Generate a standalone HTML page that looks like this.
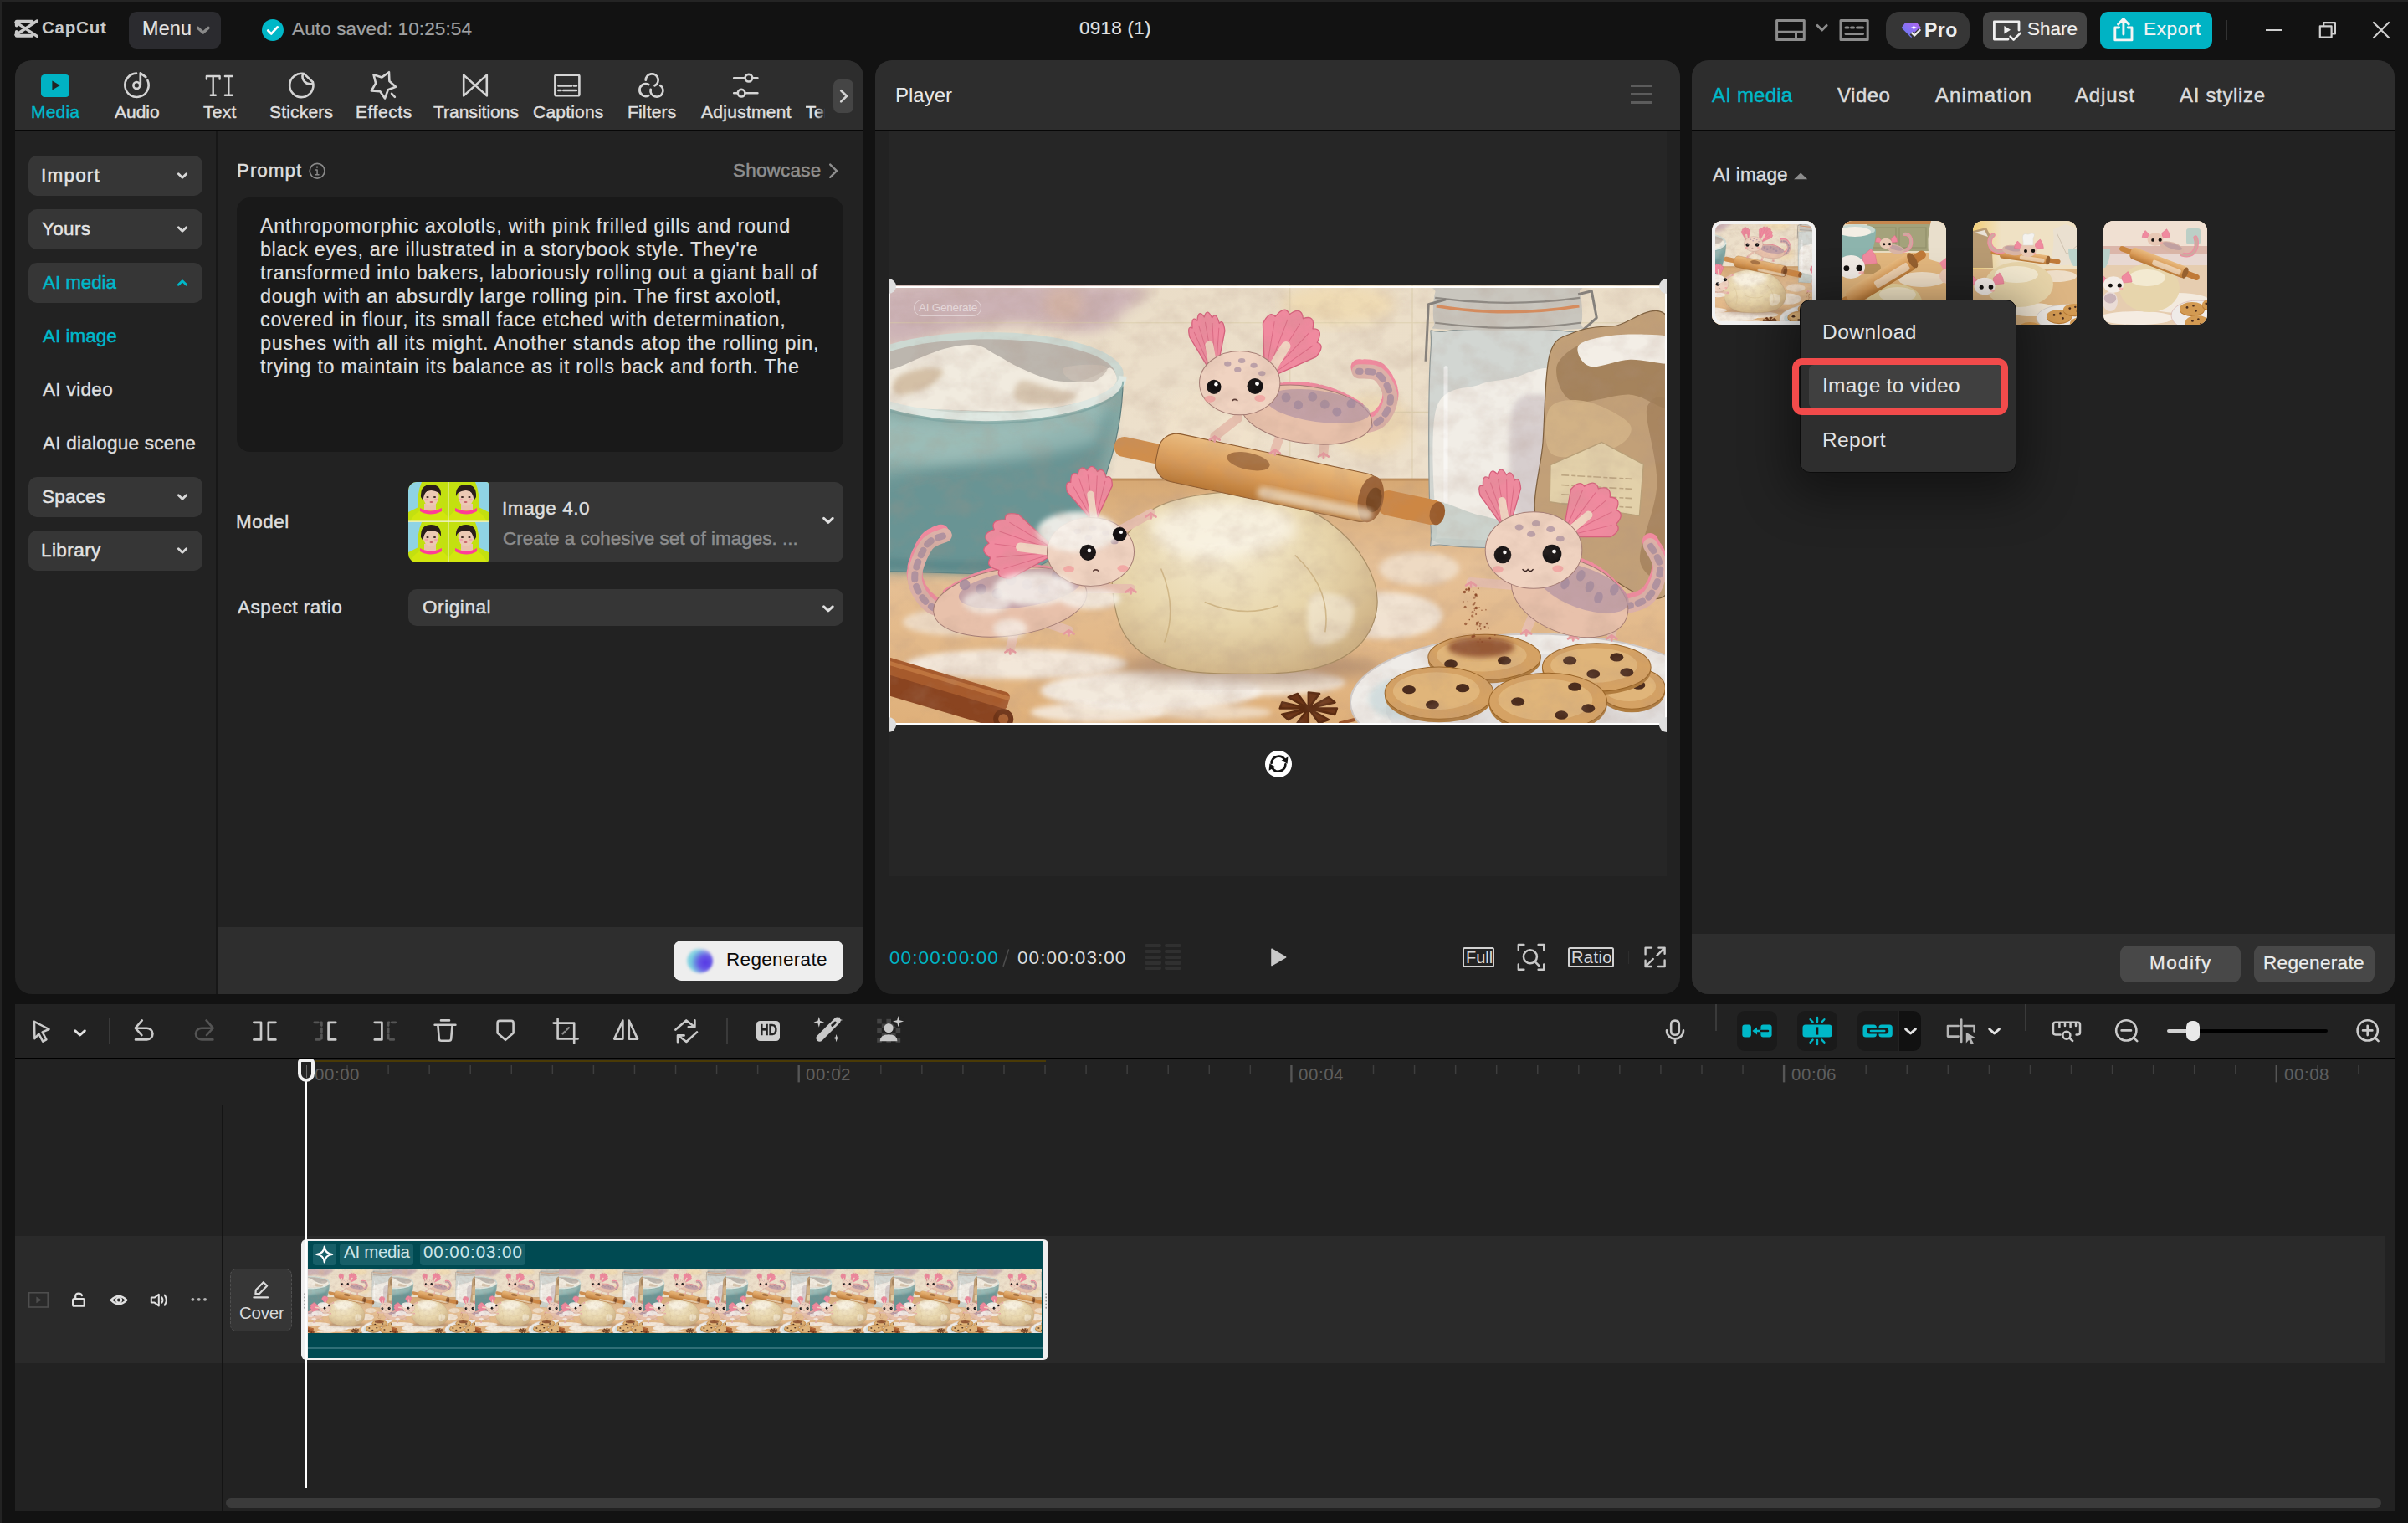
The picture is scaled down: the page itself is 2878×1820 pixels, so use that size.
<!DOCTYPE html>
<html lang="en">
<head>
<meta charset="utf-8">
<title>CapCut - 0918 (1)</title>
<style>
*{box-sizing:border-box;margin:0;padding:0}
html,body{width:2878px;height:1820px;overflow:hidden;background:#121212}
body{font-family:"Liberation Sans",sans-serif;color:#dcdcdc;font-size:22px;position:relative}
.abs{position:absolute}
.t{position:absolute;white-space:nowrap;line-height:1;-webkit-text-stroke:0.45px}
svg{position:absolute;overflow:visible}
</style>
</head>
<body>
<svg width="0" height="0" style="position:absolute"><defs>
<filter id="sc_b3" x="-20%" y="-20%" width="140%" height="140%"><feGaussianBlur stdDeviation="3"/></filter>
<filter id="sc_b6" x="-20%" y="-20%" width="140%" height="140%"><feGaussianBlur stdDeviation="8"/></filter>
<filter id="sc_tex" x="0" y="0" width="100%" height="100%"><feTurbulence type="fractalNoise" baseFrequency="0.03 0.04" numOctaves="4" seed="5" result="n"/><feColorMatrix in="n" type="matrix" values="0 0 0 0 0.42  0 0 0 0 0.28  0 0 0 0 0.22  0 0 0 2.2 -0.9"/></filter>
<linearGradient id="sc_wall" x1="0" y1="0" x2="0" y2="1"><stop offset="0" stop-color="#e9dcc6" stop-opacity=".6"/><stop offset=".5" stop-color="#f0e4d0" stop-opacity=".3"/></linearGradient>
<linearGradient id="sc_table" x1="0" y1="0" x2="0" y2="1"><stop offset="0" stop-color="#d6a873"/><stop offset=".35" stop-color="#e6c197"/><stop offset="1" stop-color="#dfb07a"/></linearGradient>
<radialGradient id="sc_dough" cx=".42" cy=".35" r=".7"><stop offset="0" stop-color="#f3e8cc"/><stop offset=".55" stop-color="#e8d6ac"/><stop offset="1" stop-color="#cdb083"/></radialGradient>
<linearGradient id="sc_pin" x1="0" y1="0" x2="0" y2="1"><stop offset="0" stop-color="#e9bb80"/><stop offset=".55" stop-color="#d99b58"/><stop offset="1" stop-color="#b87836"/></linearGradient>
<symbol id="scene" viewBox="0 0 930 524" preserveAspectRatio="none"><rect width="930" height="524" fill="#ecdfca"/><rect width="930" height="524" fill="url(#sc_wall)"/><path d="M0.0 0.0 C48.4 -11.8 243.4 -5.1 290.5 0.0 C337.6 5.1 290.5 21.6 282.5 30.7 C274.5 39.8 263.9 52.0 242.6 54.7 C221.3 57.4 184.1 46.0 154.8 46.7 C125.5 47.4 92.8 54.7 67.0 58.7 C41.2 62.7 11.2 80.4 0.0 70.6 C-11.2 60.8 -48.4 11.8 0.0 0.0 Z" fill="#c9aeb4" opacity=".9" filter="url(#sc_b6)"/><ellipse cx="210.7" cy="22.7" rx="23.9" ry="21.9" fill="#d8b49a" opacity=".55" filter="url(#sc_b6)"/><ellipse cx="537.9" cy="22.7" rx="67.8" ry="23.9" fill="#f3d9a4" opacity=".55" filter="url(#sc_b6)"/><ellipse cx="577.8" cy="166.4" rx="47.9" ry="35.9" fill="#efd3a0" opacity=".5" filter="url(#sc_b6)"/><ellipse cx="386.3" cy="170.4" rx="59.9" ry="47.9" fill="#f2e3cb" opacity=".6" filter="url(#sc_b6)"/><path d="M480.0 0 V234.2 M625.7 0 V234.2 M0 44.7 H930 M480.0 151.2 H649.6" stroke="#d9caa8" stroke-width="1.2" fill="none" opacity=".7"/><rect x="0" y="231.0" width="930" height="293.0" fill="#e0b583"/><rect x="0" y="231.0" width="930" height="293.0" fill="url(#sc_table)"/><rect x="0" y="230.2" width="930" height="3" fill="#b98a58" opacity=".8"/><path d="M647.6 78.6 C650.6 40.0 638.7 58.7 665.6 54.7 C692.5 50.7 782.4 50.7 809.3 54.7 C836.2 58.7 823.9 40.0 827.2 78.6 C830.5 117.2 831.5 247.5 829.2 286.1 C826.9 324.7 840.5 306.1 813.2 310.1 C785.9 314.1 693.2 314.1 665.6 310.1 C638.0 306.1 650.6 324.7 647.6 286.1 C644.6 247.5 644.6 117.2 647.6 78.6 Z" fill="#d2d6d2" stroke="#8d9898" stroke-width="1.2"/><path d="M654.4 146.4 C662.9 118.5 690.3 124.5 705.5 118.5 C720.7 112.5 732.1 113.8 745.4 110.5 C758.7 107.2 772.5 98.6 785.3 98.6 C798.1 98.6 815.7 79.2 822.0 110.5 C828.3 141.8 825.3 254.2 823.2 286.1 C821.1 318.0 834.9 299.4 809.3 302.1 C783.7 304.8 695.4 304.8 669.6 302.1 C643.8 299.4 656.9 312.1 654.4 286.1 C651.9 260.2 645.9 174.3 654.4 146.4 Z" fill="#f1ede6" /><path d="M745.4 146.4 C752.0 125.1 772.7 131.8 785.3 130.5 C797.9 129.2 815.1 113.2 821.2 138.5 C827.3 163.8 829.3 255.5 822.0 282.1 C814.7 308.7 790.1 302.1 777.3 298.1 C764.5 294.1 750.7 283.5 745.4 258.2 C740.1 232.9 738.8 167.7 745.4 146.4 Z" fill="#cdc2c4" opacity=".7" filter="url(#sc_b3)"/><path d="M654.4 258.2 C663.7 256.2 683.7 268.8 705.5 274.1 C727.3 279.4 765.7 288.1 785.3 290.1 C804.9 292.1 818.6 283.1 823.2 286.1 C827.9 289.1 839.5 304.2 813.2 308.1 C786.9 312.0 692.9 313.0 665.6 309.3 C638.3 305.6 651.5 294.6 649.6 286.1 C647.7 277.6 645.1 260.2 654.4 258.2 Z" fill="#bfc9c4" opacity=".75"/><path d="M665.6 98.6 L665.6 258.2" stroke="#ffffff" stroke-width="5" opacity=".55" stroke-linecap="round"/><path d="M652.8 8.8 C655.1 1.8 638.9 3.8 665.6 2.8 C692.3 1.8 786.6 1.8 813.2 2.8 C839.8 3.8 822.9 1.8 825.2 8.8 C827.5 15.8 829.2 37.4 827.2 44.7 C825.2 52.0 840.1 51.4 813.2 52.7 C786.3 54.0 692.5 54.0 665.6 52.7 C638.7 51.4 653.7 52.0 651.6 44.7 C649.5 37.4 650.5 15.8 652.8 8.8 Z" fill="#c9c6be" /><path d="M654.4 24.7 Q739.4 38.7 824.4 24.7" stroke="#d88c5c" stroke-width="3.5" fill="none"/><path d="M652.8 14.8 Q739.4 26.7 825.2 14.8" stroke="#8e8a84" stroke-width="2.2" fill="none"/><path d="M652.8 44.7 Q739.4 56.7 826.0 44.7" stroke="#8e8a84" stroke-width="2.2" fill="none"/><path d="M665.6 16.8 L644.9 22.7 L641.7 90.6 M823.2 10.8 L839.2 6.8 L845.2 38.7 L827.2 54.7" stroke="#85817c" stroke-width="3" fill="none" stroke-linejoin="round"/><path d="M789.3 82.6 C795.3 61.0 804.6 62.4 817.2 56.7 C829.8 51.1 845.1 49.0 865.1 48.7 C885.1 48.4 925.0 3.8 937.0 54.7 C949.0 105.6 952.3 306.4 937.0 354.0 C921.7 401.6 872.2 351.3 845.2 340.0 C818.2 328.7 785.9 311.7 775.3 286.1 C764.6 260.5 779.0 220.3 781.3 186.4 C783.6 152.5 783.3 104.2 789.3 82.6 Z" fill="#c2a078" stroke="#7c5e3c" stroke-width="1.2"/><path d="M797.3 98.6 C798.6 87.3 813.9 76.3 825.2 70.6 C836.5 64.9 846.5 62.6 865.1 64.6 C883.7 66.6 925.0 69.0 937.0 82.6 C949.0 96.2 945.6 138.4 937.0 146.4 C928.4 154.4 905.1 131.8 885.1 130.5 C865.1 129.2 831.8 143.8 817.2 138.5 C802.6 133.2 796.0 109.9 797.3 98.6 Z" fill="#9d7c55" opacity=".8"/><path d="M905.0 146.4 C908.3 132.4 931.7 122.5 937.0 154.4 C942.3 186.3 943.7 308.7 937.0 338.0 C930.3 367.3 900.3 346.6 897.0 330.0 C893.7 313.4 915.7 268.8 917.0 238.2 C918.3 207.6 901.7 160.4 905.0 146.4 Z" fill="#a07e58" opacity=".75"/><path d="M789.3 146.4 C795.9 135.8 817.2 135.2 833.2 138.5 C849.2 141.8 879.8 157.1 885.1 166.4 C890.4 175.7 880.4 188.3 865.1 194.3 C849.8 200.3 805.9 210.3 793.3 202.3 C780.7 194.3 782.6 157.0 789.3 146.4 Z" fill="#d6b68a" opacity=".8"/><path d="M823.2 72.6 C826.5 66.6 843.5 63.0 857.1 60.7 C870.7 58.4 891.7 58.1 905.0 58.7 C918.3 59.4 931.7 58.9 937.0 64.6 C942.3 70.2 945.6 88.6 937.0 92.6 C928.4 96.6 901.7 87.9 885.1 88.6 C868.5 89.3 847.5 99.3 837.2 96.6 C826.9 93.9 819.9 78.6 823.2 72.6 Z" fill="#f3eee6" /><path d="M790.1 214.3 L851.2 187.2 L901.0 213.5 L896.2 274.9 L789.3 258.2 Z" fill="#e3d1aa" stroke="#b9a078" stroke-width="1.4"/><path d="M803.3 226.3 L887.1 231.0" stroke="#b49c78" stroke-width="1.6" opacity=".8" stroke-dasharray="9 3 5 2"/><path d="M803.3 238.2 L887.1 243.0" stroke="#b49c78" stroke-width="1.6" opacity=".8" stroke-dasharray="9 3 5 2"/><path d="M803.3 249.4 L887.1 254.2" stroke="#b49c78" stroke-width="1.6" opacity=".8" stroke-dasharray="9 3 5 2"/><path d="M803.3 260.2 L887.1 265.0" stroke="#b49c78" stroke-width="1.6" opacity=".8" stroke-dasharray="9 3 5 2"/><path d="M-36.7 110.5 L281.3 110.5 C280.5 170.4 264.6 234.2 230.6 290.1 C212.7 318.0 182.8 342.8 140.9 345.2 L-36.7 340.0 Z" fill="#86aaa6" stroke="#5b7d7e" stroke-width="1.2"/><path d="M-36.7 234.2 C67.0 218.3 166.8 194.3 266.6 146.4 C262.6 218.3 234.6 290.1 210.7 318.0 C186.8 342.0 154.8 345.2 140.9 345.2 L-36.7 340.0 Z" fill="#648f90" opacity=".8" filter="url(#sc_b6)"/><path d="M-36.7 150.4 C67.0 170.4 186.8 166.4 266.6 130.5 L250.6 186.4 C146.8 218.3 47.1 218.3 -36.7 202.3 Z" fill="#a9c8c2" opacity=".6" filter="url(#sc_b6)"/><path d="M-36.7 322.0 C47.1 330.0 118.9 332.0 174.8 322.0 L154.8 344.0 L-36.7 340.0 Z" fill="#4f7f82" opacity=".55" filter="url(#sc_b3)"/><ellipse cx="118.9" cy="105.7" rx="162.8" ry="49.9" fill="#cdd9d2" /><ellipse cx="118.9" cy="107.3" rx="153.6" ry="43.1" fill="#bcb6ae" /><path d="M-28.7 110.5 C-22.1 103.8 -0.1 102.6 11.2 98.6 C22.5 94.6 28.8 90.6 39.1 86.6 C49.4 82.6 61.7 77.1 73.0 74.6 C84.3 72.1 97.2 69.9 106.9 71.4 C116.6 72.9 122.2 78.9 130.9 83.4 C139.6 87.9 148.2 93.8 158.8 98.6 C169.4 103.4 183.4 109.8 194.7 112.5 C206.0 115.2 217.4 115.5 226.7 114.5 C236.0 113.5 243.9 109.2 250.6 106.5 C257.2 103.8 263.0 96.9 266.6 98.6 C270.2 100.3 276.5 110.2 272.5 116.5 C268.5 122.8 262.2 131.0 242.6 136.5 C223.0 142.0 190.7 147.9 154.8 149.6 C118.9 151.2 57.7 148.2 27.1 146.4 C-3.5 144.6 -19.4 144.5 -28.7 138.5 C-38.0 132.5 -35.4 117.2 -28.7 110.5 Z" fill="#f1ebdf" /><path d="M11.2 110.5 C16.5 105.2 33.8 99.9 43.1 98.6 C52.4 97.3 66.3 98.6 67.0 102.6 C67.7 106.6 56.4 117.8 47.1 122.5 C37.8 127.2 17.2 132.5 11.2 130.5 C5.2 128.5 5.9 115.8 11.2 110.5 Z" fill="#cdb699" opacity=".8" filter="url(#sc_b3)"/><path d="M158.8 114.5 C165.5 111.8 183.4 119.8 194.7 122.5 C206.0 125.2 225.4 127.2 226.7 130.5 C228.0 133.8 214.7 141.2 202.7 142.5 C190.7 143.8 162.1 143.2 154.8 138.5 C147.5 133.8 152.2 117.2 158.8 114.5 Z" fill="#cdb89e" opacity=".7" filter="url(#sc_b3)"/><path d="M210.7 98.6 C214.7 95.6 233.9 94.6 242.6 94.6 C251.2 94.6 261.9 95.3 262.6 98.6 C263.3 101.9 253.9 112.2 246.6 114.5 C239.3 116.8 224.7 115.2 218.7 112.5 C212.7 109.8 206.7 101.6 210.7 98.6 Z" fill="#c9bfb4" opacity=".8"/><path d="M-36.7 122.5 A162.8 49.9 0 0 0 281.3 108.5" stroke="#dfe8e2" stroke-width="9" fill="none"/><path d="M-36.7 129.7 A162.8 49.9 0 0 0 281.3 114.5" stroke="#7da5a2" stroke-width="2" fill="none" opacity=".8"/><ellipse cx="154.8" cy="451.7" rx="131.7" ry="18.0" fill="#f6f0e8" opacity="0.85" filter="url(#sc_b3)"/><ellipse cx="314.4" cy="483.6" rx="131.7" ry="23.9" fill="#f6f0e8" opacity="0.9" filter="url(#sc_b3)"/><ellipse cx="446.1" cy="473.7" rx="99.8" ry="16.0" fill="#f6f0e8" opacity="0.8" filter="url(#sc_b3)"/><ellipse cx="593.8" cy="393.9" rx="67.8" ry="27.9" fill="#f6f0e8" opacity="0.75" filter="url(#sc_b3)"/><ellipse cx="633.7" cy="338.0" rx="47.9" ry="20.0" fill="#f6f0e8" opacity="0.55" filter="url(#sc_b3)"/><ellipse cx="79.0" cy="401.8" rx="59.9" ry="16.0" fill="#f6f0e8" opacity="0.6" filter="url(#sc_b3)"/><ellipse cx="250.6" cy="509.6" rx="79.8" ry="12.0" fill="#f6f0e8" opacity="0.8" filter="url(#sc_b3)"/><ellipse cx="386.3" cy="509.6" rx="71.8" ry="8.8" fill="#f6f0e8" opacity="0.6" filter="url(#sc_b3)"/><ellipse cx="430.2" cy="455.7" rx="159.6" ry="19.2" fill="#9c7c66" opacity=".55" filter="url(#sc_b6)"/><path d="M268.6 361.9 C267.3 343.3 270.2 326.1 278.5 310.1 C286.8 294.2 300.4 276.5 318.4 266.2 C336.4 255.9 363.0 250.9 386.3 248.2 C409.6 245.5 434.8 244.5 458.1 250.2 C481.4 255.8 507.3 268.8 525.9 282.1 C544.5 295.4 560.1 313.4 569.8 330.0 C579.4 346.6 585.1 365.3 583.8 381.9 C582.5 398.5 574.9 417.2 561.9 429.8 C548.9 442.4 530.0 452.1 506.0 457.7 C482.1 463.3 446.1 464.0 418.2 463.7 C390.3 463.4 360.3 462.7 338.4 455.7 C316.4 448.7 298.1 437.4 286.5 421.8 C274.9 406.2 269.9 380.5 268.6 361.9 Z" fill="url(#sc_dough)" stroke="#a88d63" stroke-width="1.2"/><path d="M314.4 282.1 C321.0 271.5 361.0 260.9 386.3 258.2 C411.6 255.5 449.5 259.5 466.1 266.2 C482.7 272.9 492.6 288.8 486.0 298.1 C479.4 307.4 449.5 318.0 426.2 322.0 C402.9 326.0 365.0 328.6 346.4 322.0 C327.8 315.4 307.8 292.7 314.4 282.1 Z" fill="#fbf6ea" opacity=".75" filter="url(#sc_b6)"/><path d="M506.0 369.9 C514.0 361.9 547.2 369.9 553.9 377.9 C560.5 385.9 553.9 409.8 545.9 417.8 C537.9 425.8 512.6 433.8 506.0 425.8 C499.4 417.8 498.0 377.9 506.0 369.9 Z" fill="#fbf6ea" opacity=".5" filter="url(#sc_b3)"/><path d="M326.4 338.0 Q346.4 385.9 330.4 425.8 M486.0 322.0 Q529.9 361.9 521.9 413.8 M378.3 377.9 Q426.2 397.8 466.1 381.9" stroke="#c9ae7c" stroke-width="1.6" fill="none" opacity=".8"/><g transform="rotate(12 454.9 229.4)"><rect x="266.9" y="217.4" width="62" height="24" rx="12" fill="#d08e4c"/><rect x="586.9" y="214.4" width="80" height="30" rx="14" fill="#cd8744"/><ellipse cx="659.9" cy="229.4" rx="9" ry="14" fill="#9a5c2c"/><rect x="318.9" y="200.4" width="272" height="58" rx="22" fill="url(#sc_pin)" stroke="#8e5c30" stroke-width="1.1"/><ellipse cx="578.9" cy="229.4" rx="15" ry="28.0" fill="#9b6236"/><ellipse cx="582.9" cy="229.4" rx="9" ry="15" fill="#6f421f" opacity=".8"/><rect x="444.9" y="241.4" width="140" height="14" rx="7" fill="#f3e6d0" opacity=".7" filter="url(#sc_b3)"/><ellipse cx="426.9" cy="215.4" rx="26" ry="10" fill="#8f5a30" opacity=".7"/></g><ellipse cx="769.4" cy="497.6" rx="217.5" ry="81.8" fill="#efece8" /><ellipse cx="769.4" cy="497.6" rx="217.5" ry="81.8" fill="none" stroke="#cfcac8" stroke-width="2"/><ellipse cx="769.4" cy="503.6" rx="175.6" ry="63.8" fill="#dcd8d8" opacity=".7"/><ellipse cx="609.7" cy="493.6" rx="35.9" ry="23.9" fill="#bfd3d6" opacity=".6" filter="url(#sc_b3)"/><ellipse cx="887.1" cy="484.8" rx="39.9" ry="24.7" fill="#b07c3e" /><ellipse cx="887.1" cy="480.8" rx="39.9" ry="24.7" fill="#d5a264" stroke="#9a6528" stroke-width="1"/><ellipse cx="883.9" cy="478.5" rx="31.9" ry="17.8" fill="#e2ba80" opacity=".8"/><ellipse cx="895.1" cy="476.9" rx="8.0" ry="5.2" fill="#4b2c1d" /><ellipse cx="845.2" cy="459.7" rx="64.6" ry="28.7" fill="#b07c3e" /><ellipse cx="845.2" cy="455.7" rx="64.6" ry="28.7" fill="#d5a264" stroke="#9a6528" stroke-width="1"/><ellipse cx="842.0" cy="453.3" rx="51.7" ry="20.7" fill="#e2ba80" opacity=".8"/><ellipse cx="813.2" cy="447.7" rx="8.0" ry="5.2" fill="#4b2c1d" /><ellipse cx="869.1" cy="443.7" rx="8.0" ry="5.2" fill="#4b2c1d" /><ellipse cx="881.1" cy="461.7" rx="8.0" ry="5.2" fill="#4b2c1d" /><ellipse cx="841.2" cy="463.7" rx="8.0" ry="5.2" fill="#4b2c1d" /><ellipse cx="711.5" cy="447.7" rx="67.0" ry="27.1" fill="#b07c3e" /><ellipse cx="711.5" cy="443.7" rx="67.0" ry="27.1" fill="#d5a264" stroke="#9a6528" stroke-width="1"/><ellipse cx="708.3" cy="441.3" rx="53.6" ry="19.5" fill="#e2ba80" opacity=".8"/><ellipse cx="735.4" cy="447.7" rx="8.0" ry="5.2" fill="#4b2c1d" /><ellipse cx="671.6" cy="451.7" rx="8.0" ry="5.2" fill="#4b2c1d" /><ellipse cx="707.5" cy="431.8" rx="39.9" ry="12.0" fill="#8a4a2a" opacity=".85" filter="url(#sc_b3)"/><ellipse cx="657.6" cy="490.4" rx="64.6" ry="31.1" fill="#b07c3e" /><ellipse cx="657.6" cy="486.4" rx="64.6" ry="31.1" fill="#d5a264" stroke="#9a6528" stroke-width="1"/><ellipse cx="654.4" cy="484.0" rx="51.7" ry="22.4" fill="#e2ba80" opacity=".8"/><ellipse cx="621.7" cy="482.4" rx="8.0" ry="5.2" fill="#4b2c1d" /><ellipse cx="685.6" cy="480.4" rx="8.0" ry="5.2" fill="#4b2c1d" /><ellipse cx="649.6" cy="500.4" rx="8.0" ry="5.2" fill="#4b2c1d" /><ellipse cx="787.3" cy="500.8" rx="70.2" ry="34.3" fill="#b07c3e" /><ellipse cx="787.3" cy="496.8" rx="70.2" ry="34.3" fill="#d5a264" stroke="#9a6528" stroke-width="1"/><ellipse cx="784.1" cy="494.4" rx="56.2" ry="24.7" fill="#e2ba80" opacity=".8"/><ellipse cx="819.2" cy="478.9" rx="8.0" ry="5.2" fill="#4b2c1d" /><ellipse cx="751.4" cy="496.8" rx="8.0" ry="5.2" fill="#4b2c1d" /><ellipse cx="803.3" cy="512.8" rx="8.0" ry="5.2" fill="#4b2c1d" /><ellipse cx="835.2" cy="504.8" rx="8.0" ry="5.2" fill="#4b2c1d" /><circle cx="705.5" cy="384.5" r="0.8" fill="#8a4626" opacity="0.74"/><circle cx="708.4" cy="387.7" r="0.8" fill="#8a4626" opacity="0.73"/><circle cx="693.5" cy="362.8" r="0.8" fill="#8a4626" opacity="0.69"/><circle cx="706.5" cy="422.6" r="0.8" fill="#8a4626" opacity="0.60"/><circle cx="712.0" cy="407.5" r="1.1" fill="#8a4626" opacity="0.94"/><circle cx="693.0" cy="363.5" r="1.6" fill="#8a4626" opacity="0.63"/><circle cx="701.8" cy="370.9" r="1.6" fill="#8a4626" opacity="0.58"/><circle cx="706.7" cy="404.0" r="1.4" fill="#8a4626" opacity="0.67"/><circle cx="704.4" cy="401.5" r="0.9" fill="#8a4626" opacity="0.81"/><circle cx="701.6" cy="392.4" r="1.0" fill="#8a4626" opacity="0.76"/><circle cx="697.0" cy="394.3" r="1.5" fill="#8a4626" opacity="0.61"/><circle cx="714.6" cy="403.5" r="1.3" fill="#8a4626" opacity="0.89"/><circle cx="699.5" cy="415.2" r="0.8" fill="#8a4626" opacity="0.69"/><circle cx="724.1" cy="417.3" r="0.9" fill="#8a4626" opacity="0.72"/><circle cx="690.0" cy="362.9" r="1.3" fill="#8a4626" opacity="0.89"/><circle cx="688.6" cy="383.7" r="1.5" fill="#8a4626" opacity="0.77"/><circle cx="689.2" cy="403.9" r="1.7" fill="#8a4626" opacity="0.71"/><circle cx="707.2" cy="410.3" r="0.8" fill="#8a4626" opacity="0.82"/><circle cx="716.6" cy="409.0" r="1.0" fill="#8a4626" opacity="0.67"/><circle cx="703.0" cy="410.6" r="0.7" fill="#8a4626" opacity="0.71"/><circle cx="699.4" cy="372.7" r="1.5" fill="#8a4626" opacity="0.56"/><circle cx="700.2" cy="378.7" r="1.1" fill="#8a4626" opacity="0.89"/><circle cx="687.9" cy="366.0" r="1.7" fill="#8a4626" opacity="0.87"/><circle cx="708.7" cy="425.4" r="1.0" fill="#8a4626" opacity="0.69"/><circle cx="713.3" cy="387.1" r="0.9" fill="#8a4626" opacity="0.58"/><circle cx="686.3" cy="377.5" r="1.0" fill="#8a4626" opacity="0.72"/><circle cx="702.5" cy="404.6" r="1.2" fill="#8a4626" opacity="0.67"/><circle cx="703.0" cy="402.9" r="1.7" fill="#8a4626" opacity="0.81"/><circle cx="693.7" cy="399.0" r="0.8" fill="#8a4626" opacity="0.90"/><circle cx="697.6" cy="419.1" r="1.7" fill="#8a4626" opacity="0.86"/><circle cx="697.5" cy="389.7" r="1.4" fill="#8a4626" opacity="0.53"/><circle cx="698.3" cy="365.0" r="0.9" fill="#8a4626" opacity="0.57"/><circle cx="699.7" cy="385.7" r="0.9" fill="#8a4626" opacity="0.55"/><circle cx="699.9" cy="387.5" r="0.7" fill="#8a4626" opacity="0.89"/><circle cx="706.1" cy="406.5" r="1.1" fill="#8a4626" opacity="0.66"/><circle cx="701.4" cy="369.2" r="1.6" fill="#8a4626" opacity="0.95"/><circle cx="698.1" cy="395.3" r="0.8" fill="#8a4626" opacity="0.65"/><circle cx="699.0" cy="380.0" r="1.6" fill="#8a4626" opacity="0.57"/><circle cx="704.2" cy="361.7" r="0.9" fill="#8a4626" opacity="0.74"/><circle cx="693.2" cy="362.0" r="1.3" fill="#8a4626" opacity="0.94"/><circle cx="704.0" cy="425.4" r="1.1" fill="#8a4626" opacity="0.58"/><circle cx="699.5" cy="418.5" r="1.3" fill="#8a4626" opacity="0.85"/><circle cx="701.7" cy="384.9" r="1.8" fill="#8a4626" opacity="0.88"/><circle cx="718.1" cy="421.1" r="1.6" fill="#8a4626" opacity="0.83"/><circle cx="691.6" cy="377.1" r="0.7" fill="#8a4626" opacity="0.51"/><circle cx="698.1" cy="381.1" r="1.0" fill="#8a4626" opacity="0.81"/><g transform="rotate(16.5 0.0 457.7)"><rect x="-10" y="443.7" width="160" height="22" rx="6" fill="#a65a2c"/><rect x="-10" y="463.7" width="168" height="24" rx="8" fill="#8a4420"/><rect x="-10" y="447.7" width="160" height="5" fill="#c47a44" opacity=".8"/><circle cx="150" cy="475.7" r="12" fill="#6e3316"/><circle cx="150" cy="475.7" r="6" fill="#a86032"/></g><path d="M502.0 504.8 L536.0 504.8 L533.3 512.2 Z M502.0 504.8 L526.0 518.2 L514.8 522.4 Z M502.0 504.8 L502.0 523.8 L488.8 522.3 Z M502.0 504.8 L478.0 518.2 L470.5 511.9 Z M502.0 504.8 L468.0 504.8 L470.7 497.4 Z M502.0 504.8 L478.0 491.4 L489.2 487.2 Z M502.0 504.8 L502.0 485.8 L515.2 487.3 Z M502.0 504.8 L526.0 491.4 L533.5 497.7 Z " fill="#6b3416" stroke="#5a2a10" stroke-width="2.5" stroke-linejoin="round"/><path d="M539.9 522.3 L555.9 518.4" stroke="#9a5228" stroke-width="4" stroke-linecap="round"/><path d="M553.9 170.4 C559.2 169.1 578.1 168.4 585.8 162.4 C593.4 156.4 599.8 143.8 599.8 134.5 C599.8 125.2 592.1 111.8 585.8 106.5 C579.5 101.2 565.9 103.2 561.9 102.6" stroke="#f08a9f" stroke-width="19" fill="none" stroke-linecap="round" stroke-dasharray="7 5" transform="translate(0 -5)"/><path d="M553.9 170.4 C559.2 169.1 578.1 168.4 585.8 162.4 C593.4 156.4 599.8 143.8 599.8 134.5 C599.8 125.2 592.1 111.8 585.8 106.5 C579.5 101.2 565.9 103.2 561.9 102.6" stroke="#dcb1a8" stroke-width="17" fill="none" stroke-linecap="round"/><path d="M553.9 170.4 C559.2 169.1 578.1 168.4 585.8 162.4 C593.4 156.4 599.8 143.8 599.8 134.5 C599.8 125.2 592.1 111.8 585.8 106.5 C579.5 101.2 565.9 103.2 561.9 102.6" stroke="#a58b9e" stroke-width="8" fill="none" stroke-linecap="round" stroke-dasharray="6 9" opacity=".8"/><path d="M418.2 158.4 L390.3 180.4" stroke="#e6bfae" stroke-width="11" stroke-linecap="round"/><path d="M390.3 180.4 l-6 4 M390.3 180.4 l0 6 M390.3 180.4 l6 4" stroke="#e79aa0" stroke-width="2.6" stroke-linecap="round"/><path d="M470.1 174.4 L462.1 196.3" stroke="#e6bfae" stroke-width="11" stroke-linecap="round"/><path d="M462.1 196.3 l-6 4 M462.1 196.3 l0 6 M462.1 196.3 l6 4" stroke="#e79aa0" stroke-width="2.6" stroke-linecap="round"/><path d="M521.9 178.4 L520.0 200.3" stroke="#e6bfae" stroke-width="11" stroke-linecap="round"/><path d="M520.0 200.3 l-6 4 M520.0 200.3 l0 6 M520.0 200.3 l6 4" stroke="#e79aa0" stroke-width="2.6" stroke-linecap="round"/><g transform="rotate(8 500.0 154.4)"><ellipse cx="500.0" cy="128.9" rx="70.2" ry="8" fill="#f08a9f" opacity=".0"/><path d="M437.6 135.7 q62.400000000000006 -30.6 124.80000000000001 0" stroke="#f08a9f" stroke-width="9" fill="none" stroke-dasharray="7 4" stroke-linecap="round"/><ellipse cx="500.0" cy="154.4" rx="78" ry="34" fill="#e8c1ab" stroke="#a47c74" stroke-width="1"/><ellipse cx="511.7" cy="142.5" rx="62.400000000000006" ry="18.700000000000003" fill="#b393a4" opacity=".7"/><ellipse cx="457.1" cy="130.6" rx="5.5" ry="5.4" fill="#a58b9e" opacity=".85"/><ellipse cx="472.7" cy="137.4" rx="5.5" ry="5.4" fill="#a58b9e" opacity=".85"/><ellipse cx="488.3" cy="144.2" rx="5.5" ry="5.4" fill="#a58b9e" opacity=".85"/><ellipse cx="503.9" cy="132.3" rx="5.5" ry="5.4" fill="#a58b9e" opacity=".85"/><ellipse cx="519.5" cy="139.1" rx="5.5" ry="5.4" fill="#a58b9e" opacity=".85"/><ellipse cx="535.1" cy="145.9" rx="5.5" ry="5.4" fill="#a58b9e" opacity=".85"/><ellipse cx="550.7" cy="134.0" rx="5.5" ry="5.4" fill="#a58b9e" opacity=".85"/></g><path d="M391.1 112.5 L360.6 61.8 Q357.1 47.2 363.7 50.9 Q362.3 35.4 369.6 42.1 Q370.7 27.6 377.9 37.8 Q381.2 25.8 387.2 39.0 Q391.8 30.2 395.8 45.2 Q400.7 39.5 402.4 54.4 Z" fill="#f08a9f" stroke="#d6607c" stroke-width="1.3" stroke-linejoin="round"/><path d="M391.1 112.5 L365.8 55.8 M391.1 112.5 L371.3 47.8 M391.1 112.5 L379.0 43.8 M391.1 112.5 L387.6 44.9 M391.1 112.5 L395.4 50.6 " stroke="#d6607c" stroke-width="1" fill="none" opacity=".75"/><path d="M391.1 112.5 L383.9 71.4" stroke="#f0d3c1" stroke-width="9.9" stroke-linecap="round"/><path d="M450.1 112.5 L447.8 45.6 Q455.4 29.4 462.5 37.2 Q474.2 22.6 479.5 34.6 Q493.9 24.0 495.6 39.7 Q510.5 34.3 507.2 51.9 Q520.4 51.4 512.4 68.3 Q522.5 71.3 511.2 85.3 Z" fill="#f08a9f" stroke="#d6607c" stroke-width="1.3" stroke-linejoin="round"/><path d="M450.1 112.5 L461.5 43.2 M450.1 112.5 L477.1 40.8 M450.1 112.5 L491.9 45.6 M450.1 112.5 L502.7 56.8 M450.1 112.5 L507.4 71.9 " stroke="#d6607c" stroke-width="1" fill="none" opacity=".75"/><path d="M450.1 112.5 L475.1 72.5" stroke="#f0d3c1" stroke-width="11.2" stroke-linecap="round"/><ellipse cx="420.2" cy="116.5" rx="48.0" ry="38.0" fill="#f0d3c1" stroke="#a47c74" stroke-width="1"/><ellipse cx="405.8" cy="93.7" rx="4.2" ry="3.0" fill="#a58b9e" opacity=".7"/><ellipse cx="422.6" cy="89.9" rx="4.2" ry="3.0" fill="#a58b9e" opacity=".7"/><ellipse cx="437.0" cy="95.6" rx="4.2" ry="3.0" fill="#a58b9e" opacity=".7"/><ellipse cx="417.8" cy="100.5" rx="4.2" ry="3.0" fill="#a58b9e" opacity=".7"/><ellipse cx="446.6" cy="105.1" rx="4.2" ry="3.0" fill="#a58b9e" opacity=".7"/><circle cx="389.5" cy="121.1" r="8.6" fill="#141112"/><circle cx="438.4" cy="120.3" r="9.4" fill="#141112"/><circle cx="392.0" cy="118.1" r="2.2" fill="#fff"/><circle cx="440.9" cy="117.3" r="2.4" fill="#fff"/><ellipse cx="384.7" cy="135.5" rx="6.5" ry="4" fill="#f39c9c" opacity=".75"/><ellipse cx="444.2" cy="134.7" rx="6.5" ry="4" fill="#f39c9c" opacity=".75"/><path d="M411.4 137.4 q3 -2.500 6 0" stroke="#5a3a34" stroke-width="1.5" fill="none" stroke-linecap="round"/><path d="M865.1 385.9 C871.8 383.9 895.7 381.9 905.0 373.9 C914.3 365.9 920.3 348.6 921.0 338.0 C921.7 327.4 911.0 314.8 909.0 310.1" stroke="#f08a9f" stroke-width="19" fill="none" stroke-linecap="round" stroke-dasharray="7 5" transform="translate(0 -5)"/><path d="M865.1 385.9 C871.8 383.9 895.7 381.9 905.0 373.9 C914.3 365.9 920.3 348.6 921.0 338.0 C921.7 327.4 911.0 314.8 909.0 310.1" stroke="#dcb1a8" stroke-width="17" fill="none" stroke-linecap="round"/><path d="M865.1 385.9 C871.8 383.9 895.7 381.9 905.0 373.9 C914.3 365.9 920.3 348.6 921.0 338.0 C921.7 327.4 911.0 314.8 909.0 310.1" stroke="#a58b9e" stroke-width="8" fill="none" stroke-linecap="round" stroke-dasharray="6 9" opacity=".8"/><path d="M745.4 357.9 L695.5 354.0" stroke="#e6bfae" stroke-width="11" stroke-linecap="round"/><path d="M695.5 354.0 l-6 4 M695.5 354.0 l0 6 M695.5 354.0 l6 4" stroke="#e79aa0" stroke-width="2.6" stroke-linecap="round"/><path d="M769.4 393.9 L761.4 411.8" stroke="#e6bfae" stroke-width="11" stroke-linecap="round"/><path d="M761.4 411.8 l-6 4 M761.4 411.8 l0 6 M761.4 411.8 l6 4" stroke="#e79aa0" stroke-width="2.6" stroke-linecap="round"/><path d="M829.2 401.8 L817.2 417.8" stroke="#e6bfae" stroke-width="11" stroke-linecap="round"/><path d="M817.2 417.8 l-6 4 M817.2 417.8 l0 6 M817.2 417.8 l6 4" stroke="#e79aa0" stroke-width="2.6" stroke-linecap="round"/><path d="M865.1 401.8 L863.1 417.8" stroke="#e6bfae" stroke-width="11" stroke-linecap="round"/><path d="M863.1 417.8 l-6 4 M863.1 417.8 l0 6 M863.1 417.8 l6 4" stroke="#e79aa0" stroke-width="2.6" stroke-linecap="round"/><g transform="rotate(20 813.2 371.9)"><ellipse cx="813.2" cy="338.9" rx="64.8" ry="8" fill="#f08a9f" opacity=".0"/><path d="M755.6 347.7 q57.6 -39.6 115.2 0" stroke="#f08a9f" stroke-width="9" fill="none" stroke-dasharray="7 4" stroke-linecap="round"/><ellipse cx="813.2" cy="371.9" rx="72" ry="44" fill="#e8c1ab" stroke="#a47c74" stroke-width="1"/><ellipse cx="824.0" cy="356.5" rx="57.6" ry="24.200000000000003" fill="#b393a4" opacity=".7"/><ellipse cx="773.6" cy="341.1" rx="5.0" ry="7.0" fill="#a58b9e" opacity=".85"/><ellipse cx="788.0" cy="349.9" rx="5.0" ry="7.0" fill="#a58b9e" opacity=".85"/><ellipse cx="802.4" cy="358.7" rx="5.0" ry="7.0" fill="#a58b9e" opacity=".85"/><ellipse cx="816.8" cy="343.3" rx="5.0" ry="7.0" fill="#a58b9e" opacity=".85"/><ellipse cx="831.2" cy="352.1" rx="5.0" ry="7.0" fill="#a58b9e" opacity=".85"/><ellipse cx="845.6" cy="360.9" rx="5.0" ry="7.0" fill="#a58b9e" opacity=".85"/><ellipse cx="860.0" cy="345.5" rx="5.0" ry="7.0" fill="#a58b9e" opacity=".85"/></g><path d="M739.4 296.1 L706.5 250.8 Q702.8 236.7 710.0 239.3 Q708.9 224.3 717.1 230.1 Q718.9 216.0 726.9 225.4 Q731.2 213.8 737.8 226.4 Q743.5 218.3 747.6 232.7 Q753.5 227.8 754.8 242.2 Z" fill="#f08a9f" stroke="#d6607c" stroke-width="1.3" stroke-linejoin="round"/><path d="M739.4 296.1 L712.4 243.9 M739.4 296.1 L718.9 235.3 M739.4 296.1 L727.9 231.0 M739.4 296.1 L737.9 232.0 M739.4 296.1 L746.9 237.8 " stroke="#d6607c" stroke-width="1" fill="none" opacity=".75"/><path d="M739.4 296.1 L732.5 257.2" stroke="#f0d3c1" stroke-width="9.3" stroke-linecap="round"/><path d="M804.5 300.1 L814.5 243.4 Q825.1 231.4 830.5 239.8 Q844.6 230.7 847.3 242.6 Q862.8 238.3 861.1 252.6 Q875.5 253.4 868.5 267.9 Q879.8 272.7 868.4 284.9 Q875.7 291.8 862.1 300.1 Z" fill="#f08a9f" stroke="#d6607c" stroke-width="1.3" stroke-linejoin="round"/><path d="M804.5 300.1 L828.4 244.6 M804.5 300.1 L843.9 247.2 M804.5 300.1 L856.5 256.4 M804.5 300.1 L863.4 270.5 M804.5 300.1 L863.3 286.2 " stroke="#d6607c" stroke-width="1" fill="none" opacity=".75"/><path d="M804.5 300.1 L835.6 274.0" stroke="#f0d3c1" stroke-width="9.6" stroke-linecap="round"/><ellipse cx="770.2" cy="316.0" rx="57.599999999999994" ry="45.6" fill="#f0d3c1" stroke="#a47c74" stroke-width="1"/><ellipse cx="752.9" cy="288.6" rx="5.0" ry="3.6" fill="#a58b9e" opacity=".7"/><ellipse cx="773.1" cy="284.1" rx="5.0" ry="3.6" fill="#a58b9e" opacity=".7"/><ellipse cx="790.4" cy="290.9" rx="5.0" ry="3.6" fill="#a58b9e" opacity=".7"/><ellipse cx="767.3" cy="296.8" rx="5.0" ry="3.6" fill="#a58b9e" opacity=".7"/><ellipse cx="801.9" cy="302.3" rx="5.0" ry="3.6" fill="#a58b9e" opacity=".7"/><circle cx="733.3" cy="321.5" r="10.3" fill="#141112"/><circle cx="792.1" cy="320.6" r="11.3" fill="#141112"/><circle cx="735.8" cy="318.5" r="2.2" fill="#fff"/><circle cx="794.6" cy="317.6" r="2.4" fill="#fff"/><ellipse cx="727.6" cy="338.8" rx="6.5" ry="4" fill="#f39c9c" opacity=".75"/><ellipse cx="799.0" cy="337.9" rx="6.5" ry="4" fill="#f39c9c" opacity=".75"/><path d="M757.3 339.1 q3 4 6 0 q3 4 6 0" stroke="#3a2420" stroke-width="1.6" fill="none" stroke-linecap="round"/><path d="M87.0 393.9 C81.0 391.9 60.1 389.2 51.1 381.9 C42.1 374.6 33.8 362.0 33.1 350.0 C32.4 338.0 41.1 318.8 47.1 310.1 C53.1 301.5 65.3 300.1 69.0 298.1" stroke="#f08a9f" stroke-width="19" fill="none" stroke-linecap="round" stroke-dasharray="7 5" transform="translate(0 -5)"/><path d="M87.0 393.9 C81.0 391.9 60.1 389.2 51.1 381.9 C42.1 374.6 33.8 362.0 33.1 350.0 C32.4 338.0 41.1 318.8 47.1 310.1 C53.1 301.5 65.3 300.1 69.0 298.1" stroke="#dcb1a8" stroke-width="17" fill="none" stroke-linecap="round"/><path d="M87.0 393.9 C81.0 391.9 60.1 389.2 51.1 381.9 C42.1 374.6 33.8 362.0 33.1 350.0 C32.4 338.0 41.1 318.8 47.1 310.1 C53.1 301.5 65.3 300.1 69.0 298.1" stroke="#a58b9e" stroke-width="8" fill="none" stroke-linecap="round" stroke-dasharray="6 9" opacity=".8"/><path d="M226.7 361.9 L290.5 361.9" stroke="#e6bfae" stroke-width="11" stroke-linecap="round"/><path d="M290.5 361.9 l-6 4 M290.5 361.9 l0 6 M290.5 361.9 l6 4" stroke="#e79aa0" stroke-width="2.6" stroke-linecap="round"/><path d="M266.6 298.1 L314.4 272.1" stroke="#e6bfae" stroke-width="11" stroke-linecap="round"/><path d="M314.4 272.1 l-6 4 M314.4 272.1 l0 6 M314.4 272.1 l6 4" stroke="#e79aa0" stroke-width="2.6" stroke-linecap="round"/><path d="M154.8 401.8 L146.8 433.8" stroke="#e6bfae" stroke-width="11" stroke-linecap="round"/><path d="M146.8 433.8 l-6 4 M146.8 433.8 l0 6 M146.8 433.8 l6 4" stroke="#e79aa0" stroke-width="2.6" stroke-linecap="round"/><path d="M186.8 401.8 L216.7 411.8" stroke="#e6bfae" stroke-width="11" stroke-linecap="round"/><path d="M216.7 411.8 l-6 4 M216.7 411.8 l0 6 M216.7 411.8 l6 4" stroke="#e79aa0" stroke-width="2.6" stroke-linecap="round"/><g transform="rotate(-8 146.8 377.9)"><ellipse cx="146.8" cy="347.9" rx="82.8" ry="8" fill="#f08a9f" opacity=".0"/><path d="M73.2 355.9 q73.60000000000001 -36.0 147.20000000000002 0" stroke="#f08a9f" stroke-width="9" fill="none" stroke-dasharray="7 4" stroke-linecap="round"/><ellipse cx="146.8" cy="377.9" rx="92" ry="40" fill="#e8c1ab" stroke="#a47c74" stroke-width="1"/><ellipse cx="160.60000000000002" cy="363.9" rx="73.60000000000001" ry="22.0" fill="#b393a4" opacity=".7"/><ellipse cx="96.2" cy="349.9" rx="6.4" ry="6.4" fill="#a58b9e" opacity=".85"/><ellipse cx="114.6" cy="357.9" rx="6.4" ry="6.4" fill="#a58b9e" opacity=".85"/><ellipse cx="133.0" cy="365.9" rx="6.4" ry="6.4" fill="#a58b9e" opacity=".85"/><ellipse cx="151.4" cy="351.9" rx="6.4" ry="6.4" fill="#a58b9e" opacity=".85"/><ellipse cx="169.8" cy="359.9" rx="6.4" ry="6.4" fill="#a58b9e" opacity=".85"/><ellipse cx="188.2" cy="367.9" rx="6.4" ry="6.4" fill="#a58b9e" opacity=".85"/><ellipse cx="206.6" cy="353.9" rx="6.4" ry="6.4" fill="#a58b9e" opacity=".85"/></g><path d="M204.7 318.0 L147.5 349.7 Q129.8 349.8 133.4 339.8 Q115.4 335.4 123.7 325.1 Q108.2 316.3 121.5 307.8 Q110.7 296.3 127.8 291.5 Q122.3 279.6 140.8 279.6 Q139.7 269.0 156.9 273.4 Z" fill="#f08a9f" stroke="#d6607c" stroke-width="1.3" stroke-linejoin="round"/><path d="M204.7 318.0 L139.1 338.1 M204.7 318.0 L130.2 324.5 M204.7 318.0 L128.2 308.6 M204.7 318.0 L134.0 293.6 M204.7 318.0 L145.9 282.7 " stroke="#d6607c" stroke-width="1" fill="none" opacity=".75"/><path d="M204.7 318.0 L159.0 312.4" stroke="#f0d3c1" stroke-width="10.9" stroke-linecap="round"/><path d="M247.4 284.1 L214.7 246.5 Q211.4 233.6 219.0 234.9 Q218.7 221.0 227.2 225.5 Q230.2 212.6 238.5 220.9 Q244.2 210.7 250.6 222.2 Q257.6 215.6 261.1 229.0 Q268.1 225.7 268.4 239.0 Z" fill="#f08a9f" stroke="#d6607c" stroke-width="1.3" stroke-linejoin="round"/><path d="M247.4 284.1 L221.3 238.8 M247.4 284.1 L228.8 230.2 M247.4 284.1 L239.2 225.9 M247.4 284.1 L250.4 227.2 M247.4 284.1 L260.0 233.4 " stroke="#d6607c" stroke-width="1" fill="none" opacity=".75"/><path d="M247.4 284.1 L242.5 249.3" stroke="#f0d3c1" stroke-width="8.3" stroke-linecap="round"/><ellipse cx="242.6" cy="318.0" rx="51.84" ry="41.040000000000006" fill="#f0d3c1" stroke="#a47c74" stroke-width="1"/><ellipse cx="227.0" cy="293.4" rx="4.5" ry="3.2" fill="#a58b9e" opacity=".7"/><ellipse cx="245.2" cy="289.3" rx="4.5" ry="3.2" fill="#a58b9e" opacity=".7"/><ellipse cx="260.7" cy="295.4" rx="4.5" ry="3.2" fill="#a58b9e" opacity=".7"/><ellipse cx="240.0" cy="300.8" rx="4.5" ry="3.2" fill="#a58b9e" opacity=".7"/><ellipse cx="271.1" cy="305.7" rx="4.5" ry="3.2" fill="#a58b9e" opacity=".7"/><ellipse cx="216.7" cy="338.5" rx="6.5" ry="4" fill="#f39c9c" opacity=".75"/><ellipse cx="281.0" cy="337.7" rx="6.5" ry="4" fill="#f39c9c" opacity=".75"/><path d="M245.8 340.6 q3 -2.500 6 0" stroke="#5a3a34" stroke-width="1.5" fill="none" stroke-linecap="round"/><ellipse cx="226.7" cy="294.1" rx="47.9" ry="23.9" fill="#f8f4ee" opacity="0.9" filter="url(#sc_b3)"/><ellipse cx="174.8" cy="361.9" rx="47.9" ry="20.0" fill="#f8f4ee" opacity="0.85" filter="url(#sc_b3)"/><ellipse cx="118.9" cy="377.9" rx="27.9" ry="14.0" fill="#f8f4ee" opacity="0.7" filter="url(#sc_b3)"/><ellipse cx="242.6" cy="373.9" rx="35.9" ry="12.0" fill="#f8f4ee" opacity="0.8" filter="url(#sc_b3)"/><ellipse cx="146.8" cy="409.8" rx="20.0" ry="12.0" fill="#f8f4ee" opacity="0.7" filter="url(#sc_b3)"/><circle cx="239.4" cy="318.8" r="9.6" fill="#141112"/><circle cx="277.3" cy="296.9" r="8.4" fill="#141112"/><circle cx="241.0" cy="316.4" r="2.3" fill="#fff"/><circle cx="278.9" cy="294.5" r="2.1" fill="#fff"/><rect width="930" height="524" filter="url(#sc_tex)" opacity=".2"/></symbol>
<symbol id="scene2" viewBox="0 0 124 124"><rect width="124" height="124" fill="#e3b77e"/><rect width="124" height="38" fill="#e9dcc0"/><rect x="30" y="3" width="76" height="33" fill="#a4a27b"/><rect x="34" y="8" width="30" height="24" fill="none" stroke="#8f8d68" stroke-width="1"/><rect x="68" y="8" width="32" height="24" fill="none" stroke="#8f8d68" stroke-width="1"/><rect width="124" height="4" fill="#c6874e"/><path d="M106 0 H124 V52 L104 46 Q100 20 106 0 Z" fill="#e9dfcc"/><path d="M-4 10 H40 Q40 40 20 56 H-4 Z" fill="#8db4ad"/><ellipse cx="17" cy="11" rx="22" ry="7" fill="#c8d8d0"/><ellipse cx="15" cy="13" rx="19" ry="6" fill="#f3eee4"/><ellipse cx="30" cy="56" rx="16" ry="8" fill="#8a6a38" opacity=".45"/><ellipse cx="95" cy="70" rx="28" ry="9" fill="#f3e9da" opacity=".8"/><ellipse cx="62" cy="97" rx="33" ry="22" fill="#e9d49e"/><ellipse cx="66" cy="88" rx="22" ry="9" fill="#f6eed8" opacity=".7"/><g transform="rotate(-31 46 70)"><rect x="-14.0" y="65.38" width="17" height="9.24" rx="4.62" fill="#c9853f"/><rect x="89.0" y="64.75" width="19" height="10.5" rx="5.25" fill="#c07a38"/><rect x="0.0" y="59.5" width="92" height="21" rx="7.35" fill="url(#sc_pin)"/><ellipse cx="90.0" cy="70" rx="4.62" ry="10.08" fill="#96602f"/><rect x="36.8" y="67.9" width="46.0" height="9.450000000000001" rx="2" fill="#f6efe2" opacity=".6"/></g><path d="M72 36 Q84 34 82 22 Q80 15 74 16" stroke="#ee8ea2" stroke-width="4.125" fill="none" stroke-linecap="round"/><path d="M72 36 Q84 34 82 22 Q80 15 74 16" stroke="#cfa9a0" stroke-width="2.4" fill="none" stroke-linecap="round"/><ellipse cx="64" cy="34" rx="10" ry="5.5" fill="#d9b5a6" transform="rotate(15 64 34)"/><ellipse cx="64" cy="32.35" rx="8.0" ry="2.75" fill="#a88c9c" opacity=".5" transform="rotate(15 64 34)"/><path d="M45.6 25.9 l-6.1 -0.8 l0.8 -3.4 l2.2 -3.0 l3.7 3.8 Z" fill="#f08a9f" stroke="#dd6f88" stroke-width=".5"/><path d="M58.4 25.9 l7.4 -0.8 l-0.8 -4.1 l-2.2 -3.7 l-4.5 3.8 Z" fill="#f08a9f" stroke="#dd6f88" stroke-width=".5"/><ellipse cx="52" cy="27" rx="7.5" ry="6.1499999999999995" fill="#e8c8b4"/><circle cx="49.8" cy="27.8" r="1.5" fill="#15110f"/><circle cx="56.5" cy="27.6" r="1.6" fill="#15110f"/><ellipse cx="57.6" cy="30.1" rx="1.5" ry="0.9" fill="#f39c9c" opacity=".7"/><path d="M-4.4 52.5 l-13.8 -1.7 l1.7 -7.7 l5.1 -6.9 l8.4 8.5 Z" fill="#f08a9f" stroke="#dd6f88" stroke-width=".5"/><path d="M24.4 52.5 l16.8 -1.7 l-1.7 -9.4 l-5.1 -8.4 l-10.3 8.5 Z" fill="#f08a9f" stroke="#dd6f88" stroke-width=".5"/><ellipse cx="10" cy="55" rx="17" ry="13.94" fill="#f3ece6"/><circle cx="4.9" cy="56.7" r="3.4" fill="#15110f"/><circle cx="20.2" cy="56.4" r="3.7" fill="#15110f"/><ellipse cx="22.8" cy="62.1" rx="3.4" ry="2.0" fill="#f39c9c" opacity=".7"/><path d="M116 50 l8 -6 v20 Z" fill="#f08a9f"/><ellipse cx="126" cy="66" rx="10" ry="9" fill="#ecc9b4"/></symbol>
<symbol id="scene3" viewBox="0 0 124 124"><rect width="124" height="124" fill="#ddb684"/><rect width="124" height="58" fill="#efe1c4"/><rect width="34" height="58" fill="url(#t3glow)"/><path d="M0 12 L16 8 L22 20 L24 56 H0 Z" fill="#b89b73"/><path d="M2 14 l12 -3 l4 8 Z" fill="#e9e2d6"/><path d="M96 10 L110 4 L124 8 V52 L92 54 Q98 30 96 10 Z" fill="#eae0d0"/><path d="M100 14 L112 40 L124 30" stroke="#cfc3b0" stroke-width="1" fill="none"/><path d="M114 34 H128 V54 H120 Q114 46 114 34 Z" fill="#bcd3cb"/><ellipse cx="100" cy="66" rx="24" ry="7" fill="#f3e9da" opacity=".8"/><ellipse cx="70" cy="106" rx="30" ry="8" fill="#f5eee2" opacity=".85"/><ellipse cx="55" cy="76" rx="41" ry="27" fill="#e7d4a9"/><ellipse cx="52" cy="64" rx="26" ry="10" fill="#f6efdc" opacity=".75"/><g transform="rotate(8 62 43)"><rect x="21.0" y="40.58" width="14" height="4.84" rx="2.42" fill="#c9853f"/><rect x="89.0" y="40.25" width="16" height="5.5" rx="2.75" fill="#c07a38"/><rect x="32.0" y="37.5" width="60" height="11" rx="3.8499999999999996" fill="url(#sc_pin)"/><ellipse cx="90.0" cy="43" rx="2.42" ry="5.279999999999999" fill="#96602f"/><rect x="56.0" y="41.9" width="30.0" height="4.95" rx="2" fill="#f6efe2" opacity=".6"/></g><path d="M36 36 Q22 38 20 26 Q20 20 24 17" stroke="#ee8ea2" stroke-width="5.5" fill="none" stroke-linecap="round"/><path d="M36 36 Q22 38 20 26 Q20 20 24 17" stroke="#cfa9a0" stroke-width="3.2" fill="none" stroke-linecap="round"/><ellipse cx="48" cy="35" rx="13" ry="6" fill="#d9b5a6" transform="rotate(8 48 35)"/><ellipse cx="48" cy="33.2" rx="10.4" ry="3.0" fill="#a88c9c" opacity=".5" transform="rotate(8 48 35)"/><path d="M57.5 33.5 l-8.1 -1.0 l1.0 -4.5 l3.0 -4.0 l5.0 5.0 Z" fill="#f08a9f" stroke="#dd6f88" stroke-width=".5"/><path d="M74.5 33.5 l9.9 -1.0 l-1.0 -5.5 l-3.0 -5.0 l-6.1 5.0 Z" fill="#f08a9f" stroke="#dd6f88" stroke-width=".5"/><ellipse cx="66" cy="35" rx="10" ry="8.2" fill="#e8c8b4"/><path d="M60.0 29.0 h12.0 v-8.0 q5.0 -9.0 -6.0 -5.0 q-9.0 -3.0 -6.0 9.0 Z" fill="#f4f2ee" stroke="#d8d4cc" stroke-width=".5"/><circle cx="63.0" cy="36.0" r="2.0" fill="#15110f"/><circle cx="72.0" cy="35.8" r="2.2" fill="#15110f"/><ellipse cx="73.5" cy="39.2" rx="2.0" ry="1.2" fill="#f39c9c" opacity=".7"/><path d="M3.4 76.1 l-10.1 -1.2 l1.2 -5.6 l3.8 -5.1 l6.2 6.2 Z" fill="#f08a9f" stroke="#dd6f88" stroke-width=".5"/><path d="M24.6 76.1 l12.4 -1.2 l-1.2 -6.9 l-3.8 -6.2 l-7.6 6.2 Z" fill="#f08a9f" stroke="#dd6f88" stroke-width=".5"/><ellipse cx="14" cy="78" rx="12.5" ry="10.25" fill="#f3ece6"/><circle cx="10.2" cy="79.2" r="2.5" fill="#15110f"/><circle cx="21.5" cy="79.0" r="2.8" fill="#15110f"/><ellipse cx="23.4" cy="83.2" rx="2.5" ry="1.5" fill="#f39c9c" opacity=".7"/><ellipse cx="113" cy="116" rx="37" ry="16" fill="#ece8e4"/><ellipse cx="113" cy="116" rx="37" ry="16" fill="none" stroke="#d3cdc9" stroke-width=".8"/><ellipse cx="103" cy="115.2" rx="15" ry="8" fill="#b87a34"/><ellipse cx="103" cy="114" rx="15" ry="8" fill="#d39a52"/><circle cx="97.0" cy="112.4" r="1.4" fill="#4b2c1d"/><circle cx="107.5" cy="116.4" r="1.3" fill="#4b2c1d"/><circle cx="104.5" cy="110.4" r="1.2" fill="#4b2c1d"/><ellipse cx="121" cy="107.2" rx="13" ry="7" fill="#b87a34"/><ellipse cx="121" cy="106" rx="13" ry="7" fill="#d39a52"/><circle cx="115.8" cy="104.6" r="1.4" fill="#4b2c1d"/><circle cx="124.9" cy="108.1" r="1.3" fill="#4b2c1d"/><circle cx="122.3" cy="102.85" r="1.2" fill="#4b2c1d"/><ellipse cx="126" cy="123.2" rx="10" ry="6" fill="#b87a34"/><ellipse cx="126" cy="122" rx="10" ry="6" fill="#d39a52"/><circle cx="122.0" cy="120.8" r="1.4" fill="#4b2c1d"/><circle cx="129.0" cy="123.8" r="1.3" fill="#4b2c1d"/><circle cx="127.0" cy="119.3" r="1.2" fill="#4b2c1d"/><ellipse cx="68" cy="130.2" rx="14" ry="8" fill="#b87a34"/><ellipse cx="68" cy="129" rx="14" ry="8" fill="#d39a52"/><circle cx="62.4" cy="127.4" r="1.4" fill="#4b2c1d"/><circle cx="72.2" cy="131.4" r="1.3" fill="#4b2c1d"/><circle cx="69.4" cy="125.4" r="1.2" fill="#4b2c1d"/></symbol>
<symbol id="scene4" viewBox="0 0 124 124"><rect width="124" height="124" fill="#e6cdb0"/><rect width="124" height="52" fill="#f0e0d2"/><rect y="30" width="124" height="9" fill="#dbb6aa"/><rect y="39" width="124" height="14" fill="#e8d8d2"/><rect x="99" y="9" width="17" height="19" rx="3" fill="#bccfc6"/><path d="M-4 34 H8 Q8 48 2 56 H-4 Z" fill="#b9d0c9"/><ellipse cx="90" cy="98" rx="40" ry="12" fill="#f5efe6" opacity=".85"/><ellipse cx="40" cy="116" rx="44" ry="8" fill="#f6f0e8" opacity=".9"/><ellipse cx="55" cy="80" rx="36" ry="29" fill="#e7d5ac"/><ellipse cx="52" cy="68" rx="22" ry="10" fill="#f7f0de" opacity=".75"/><g transform="rotate(21 66 50)"><rect x="16.0" y="46.81" width="17" height="6.38" rx="3.19" fill="#c9853f"/><rect x="99.0" y="46.375" width="19" height="7.25" rx="3.625" fill="#c07a38"/><rect x="30.0" y="42.75" width="72" height="14.5" rx="5.074999999999999" fill="url(#sc_pin)"/><ellipse cx="100.0" cy="50" rx="3.19" ry="6.96" fill="#96602f"/><rect x="58.8" y="48.55" width="36.0" height="6.525" rx="2" fill="#f6efe2" opacity=".6"/></g><path d="M94 40 Q108 44 111 30 Q112 24 110 20" stroke="#ee8ea2" stroke-width="5.2250000000000005" fill="none" stroke-linecap="round"/><path d="M94 40 Q108 44 111 30 Q112 24 110 20" stroke="#cfa9a0" stroke-width="3.04" fill="none" stroke-linecap="round"/><ellipse cx="82" cy="32" rx="15" ry="6.5" fill="#d9b5a6" transform="rotate(18 82 32)"/><ellipse cx="82" cy="30.05" rx="12.0" ry="3.25" fill="#a88c9c" opacity=".5" transform="rotate(18 82 32)"/><path d="M53.9 20.6 l-7.7 -1.0 l1.0 -4.3 l2.9 -3.8 l4.7 4.8 Z" fill="#f08a9f" stroke="#dd6f88" stroke-width=".5"/><path d="M70.1 20.6 l9.4 -1.0 l-1.0 -5.2 l-2.9 -4.7 l-5.7 4.8 Z" fill="#f08a9f" stroke="#dd6f88" stroke-width=".5"/><ellipse cx="62" cy="22" rx="9.5" ry="7.789999999999999" fill="#e8c8b4"/><circle cx="59.1" cy="22.9" r="1.9" fill="#15110f"/><circle cx="67.7" cy="22.8" r="2.1" fill="#15110f"/><ellipse cx="69.1" cy="26.0" rx="1.9" ry="1.1" fill="#f39c9c" opacity=".7"/><ellipse cx="8" cy="96" rx="9" ry="12" fill="#eadcd6" transform="rotate(0 8 96)"/><ellipse cx="8" cy="92.4" rx="7.2" ry="6.0" fill="#a88c9c" opacity=".5" transform="rotate(0 8 96)"/><path d="M1.8 74.2 l-9.7 -1.2 l1.2 -5.4 l3.6 -4.9 l5.9 6.0 Z" fill="#f08a9f" stroke="#dd6f88" stroke-width=".5"/><path d="M22.2 74.2 l11.9 -1.2 l-1.2 -6.6 l-3.6 -5.9 l-7.3 6.0 Z" fill="#f08a9f" stroke="#dd6f88" stroke-width=".5"/><ellipse cx="12" cy="76" rx="12" ry="9.84" fill="#f3ece6"/><circle cx="8.4" cy="77.2" r="2.4" fill="#15110f"/><circle cx="19.2" cy="77.0" r="2.6" fill="#15110f"/><ellipse cx="21.0" cy="81.0" rx="2.4" ry="1.4" fill="#f39c9c" opacity=".7"/><ellipse cx="113" cy="113" rx="32" ry="18" fill="#efebe8"/><ellipse cx="113" cy="113" rx="32" ry="18" fill="none" stroke="#d9b9b4" stroke-width=".8"/><ellipse cx="106" cy="106.2" rx="15" ry="8" fill="#b87a34"/><ellipse cx="106" cy="105" rx="15" ry="8" fill="#d39a52"/><circle cx="100.0" cy="103.4" r="1.4" fill="#4b2c1d"/><circle cx="110.5" cy="107.4" r="1.3" fill="#4b2c1d"/><circle cx="107.5" cy="101.4" r="1.2" fill="#4b2c1d"/><ellipse cx="112" cy="122.2" rx="14" ry="8" fill="#b87a34"/><ellipse cx="112" cy="121" rx="14" ry="8" fill="#d39a52"/><circle cx="106.4" cy="119.4" r="1.4" fill="#4b2c1d"/><circle cx="116.2" cy="123.4" r="1.3" fill="#4b2c1d"/><circle cx="113.4" cy="117.4" r="1.2" fill="#4b2c1d"/><ellipse cx="126" cy="101.2" rx="8" ry="6" fill="#b87a34"/><ellipse cx="126" cy="100" rx="8" ry="6" fill="#d39a52"/><circle cx="122.8" cy="98.8" r="1.4" fill="#4b2c1d"/><circle cx="128.4" cy="101.8" r="1.3" fill="#4b2c1d"/><circle cx="126.8" cy="97.3" r="1.2" fill="#4b2c1d"/></symbol>
<linearGradient id="t3glow" x1="0" y1="0" x2="1" y2="0"><stop offset="0" stop-color="#f2cc6e" stop-opacity=".9"/><stop offset="1" stop-color="#f2cc6e" stop-opacity="0"/></linearGradient>
</defs></svg>
<!-- window frame -->
<div class="abs" style="left:0px;top:0px;width:2878px;height:2px;background:#242424;"></div>
<div class="abs" style="left:0px;top:0px;width:2px;height:1820px;background:#232323;"></div>
<!-- ===== top bar ===== -->
<svg style="left:0;top:0" width="1" height="1"><path d="M19.8 30.6 V25.7 H38.4 M19.8 38 V42.7 H38.4" fill="none" stroke="#c9c9c9" stroke-width="3.9" stroke-linecap="round" stroke-linejoin="round" stroke-linecap="butt" stroke-linejoin="miter"/><path d="M19 26.6 L44.3 43.4 M19 41.8 L44.3 25" fill="none" stroke="#c9c9c9" stroke-width="3.5" stroke-linecap="round" stroke-linejoin="round" stroke-linecap="butt"/></svg>
<div class="t" style="left:50px;top:23.35px;font-size:20.5px;color:#c9c9c9;font-weight:700;letter-spacing:0.78px;-webkit-text-stroke:0px;">CapCut</div>
<div class="abs" style="left:154px;top:14px;width:110px;height:44px;background:#2b2b2f;border-radius:9px;"></div>
<div class="t" style="left:170px;top:23.04px;font-size:23.33px;color:#e6e6e6;letter-spacing:0.2px;-webkit-text-stroke:0.2px;">Menu</div>
<svg style="left:0;top:0" width="1" height="1"><path d="M236.6 33.4 L242.8 39 L249 33.4" fill="none" stroke="#8a8a8a" stroke-width="3.4" stroke-linecap="round" stroke-linejoin="round"/></svg>
<div class="abs" style="left:312.8px;top:23px;width:26px;height:26px;background:#00b7c7;border-radius:13px;"></div>
<svg style="left:0;top:0" width="1" height="1"><path d="M320.3 36.4 L324.3 40.4 L331.6 32.4" fill="none" stroke="#ffffff" stroke-width="2.8" stroke-linecap="round" stroke-linejoin="round" /></svg>
<div class="t" style="left:349px;top:24.05px;font-size:22.5px;color:#a2a2a2;letter-spacing:0.12px;-webkit-text-stroke:0.2px;">Auto saved: 10:25:54</div>
<div class="t" style="left:1290px;top:23.35px;font-size:22.5px;color:#e2e2e2;letter-spacing:0.23px;-webkit-text-stroke:0.2px;">0918 (1)</div>
<svg style="left:0;top:0" width="1" height="1"><path d="M2123.6 24.4 H2156.3 V47.6 H2123.6 Z M2123.6 38.2 H2156.3 M2146.5 38.2 V47.6" fill="none" stroke="#8c8c8c" stroke-width="3" stroke-linecap="round" stroke-linejoin="round" stroke-linejoin="miter"/></svg>
<svg style="left:0;top:0" width="1" height="1"><path d="M2172.1 30.45 L2177.6 35.95 L2183.1 30.45" fill="none" stroke="#8c8c8c" stroke-width="3" stroke-linecap="round" stroke-linejoin="round"/></svg>
<svg style="left:0;top:0" width="1" height="1"><path d="M2200 24.4 H2232.2 V47.6 H2200 Z" fill="none" stroke="#8c8c8c" stroke-width="3" stroke-linecap="round" stroke-linejoin="round" stroke-linejoin="miter"/><path d="M2206 33 H2209 M2212.5 33 H2215.5 M2219.5 33 H2226.5 M2206 40.5 H2226.5" fill="none" stroke="#8c8c8c" stroke-width="3" stroke-linecap="round" stroke-linejoin="round" stroke-linecap="butt"/></svg>
<div class="abs" style="left:2254px;top:14px;width:100px;height:44px;background:#363636;border-radius:16px;"></div>
<svg style="left:2272px;top:26px" width="26" height="20" viewBox="0 0 26 20"><defs><linearGradient id="gpro" x1="0" y1="1" x2="1" y2="0"><stop offset="0" stop-color="#5b7cf5"/><stop offset="1" stop-color="#b765f0"/></linearGradient></defs><path d="M5.2 1 H19 L24 7.2 L12.2 19 L0.6 7.2 Z" fill="url(#gpro)"/><path d="M15.4 3.2 L16.4 6 L19.2 7 L16.4 8 L15.4 10.8 L14.4 8 L11.6 7 L14.4 6 Z" fill="#fff"/><path d="M12.4 13.6 L16 17.2 L23 9.8" fill="none" stroke="#363636" stroke-width="5.4"/><path d="M13.4 13.6 L16.2 16.4 L22.6 10" fill="none" stroke="#f0f0f0" stroke-width="2.4" stroke-linecap="round" stroke-linejoin="round"/></svg>
<div class="t" style="left:2300px;top:24.6px;font-size:23px;color:#ededed;font-weight:700;letter-spacing:0.5px;-webkit-text-stroke:0px;">Pro</div>
<div class="abs" style="left:2370px;top:14px;width:124px;height:44px;background:#444444;border-radius:9px;"></div>
<svg style="left:0;top:0" width="1" height="1"><path d="M2400 47 H2383.4 V26 H2413 V36" fill="none" stroke="#f0f0f0" stroke-width="2.8" stroke-linecap="round" stroke-linejoin="round" stroke-linejoin="miter" stroke-linecap="butt"/><path d="M2395.4 31 L2403 35.8 L2395.4 40.6 Z" fill="#f0f0f0"/><path d="M2402.6 43.6 L2406.6 47.6 L2414.4 39.8" fill="none" stroke="#f0f0f0" stroke-width="2.6" stroke-linecap="round" stroke-linejoin="round" /></svg>
<div class="t" style="left:2423px;top:23.95px;font-size:22.5px;color:#f0f0f0;-webkit-text-stroke:0.2px;">Share</div>
<div class="abs" style="left:2510px;top:14px;width:134px;height:44px;background:#00b3c4;border-radius:9px;"></div>
<svg style="left:0;top:0" width="1" height="1"><path d="M2532.6 33 H2527.8 V47.9 H2548 V33 H2543.2 M2537.9 41 V23.2 M2531.6 29 L2537.9 22.6 L2544.2 29" fill="none" stroke="#f4f4f4" stroke-width="2.9" stroke-linecap="round" stroke-linejoin="round" stroke-linejoin="miter" stroke-linecap="butt"/></svg>
<div class="t" style="left:2562px;top:24.15px;font-size:22.5px;color:#f4f4f4;letter-spacing:0.62px;-webkit-text-stroke:0.2px;">Export</div>
<div class="abs" style="left:2660px;top:24px;width:2px;height:24px;background:#323232;"></div>
<div class="abs" style="left:2708px;top:34.8px;width:20px;height:2.2px;background:#cfcfcf;"></div>
<svg style="left:0;top:0" width="1" height="1"><path d="M2772.8 31.4 H2786.6 V44.7 H2772.8 Z M2777.2 31.2 V27.2 H2790.9 V40.4 H2787" fill="none" stroke="#cfcfcf" stroke-width="2.2" stroke-linecap="round" stroke-linejoin="round" stroke-linejoin="miter" stroke-linecap="butt"/></svg>
<svg style="left:0;top:0" width="1" height="1"><path d="M2837 27 L2855 45 M2855 27 L2837 45" fill="none" stroke="#cfcfcf" stroke-width="2.2" stroke-linecap="round" stroke-linejoin="round" stroke-linecap="butt"/></svg>
<!-- ===== left panel ===== -->
<div class="abs" style="left:18px;top:72px;width:1014px;height:1116px;background:#222222;border-radius:20px;overflow:hidden;"><div class="abs" style="left:0;top:0;width:1014px;height:83px;background:#2d2d2d"></div><div class="abs" style="left:0;top:83px;width:1014px;height:1px;background:#070707"></div><div class="abs" style="left:240px;top:84px;width:2px;height:1040px;background:#171717"></div><div class="abs" style="left:242px;top:1036px;width:772px;height:80px;background:#2e2e2e"></div></div>
<div class="abs" style="left:49.2px;top:88.5px;width:33.6px;height:27px;background:#00b3c4;border-radius:4.5px;"></div>
<svg style="left:0;top:0" width="1" height="1"><path d="M62.4 96.6 L71.8 102.1 L62.4 107.6 Z" fill="#222"/></svg>
<svg style="left:0;top:0" width="1" height="1"><path d="M176.4 96.05 A14.15 14.15 0 1 1 162.98 87.67" fill="none" stroke="#d4d4d4" stroke-width="2.6" stroke-linecap="round" stroke-linejoin="round" /><circle cx="163.3" cy="101.95" r="3.9" fill="none" stroke="#d4d4d4" stroke-width="2.6"/><path d="M167.8 101.9 V87.4 L174.3 92.2" fill="none" stroke="#d4d4d4" stroke-width="2.7" stroke-linecap="round" stroke-linejoin="round" stroke-linejoin="miter"/></svg>
<svg style="left:0;top:0" width="1" height="1"><path d="M246.9 94.6 V91 H262.6 V94.6 M254.7 91 V113.7 M251.7 113.7 H257.8 M268.9 91 H277.6 M273.3 91 V113.7 M268.9 113.7 H277.6" fill="none" stroke="#d4d4d4" stroke-width="2.4" stroke-linecap="round" stroke-linejoin="round" stroke-linecap="butt" stroke-linejoin="miter"/></svg>
<svg style="left:0;top:0" width="1" height="1"><path d="M373.97 98.19 A14.15 14.15 0 1 1 363.37 88.13 L373.97 98.19" fill="none" stroke="#d4d4d4" stroke-width="2.6" stroke-linecap="round" stroke-linejoin="round" /><path d="M362 88.2 C359.9 95.5 365.5 101.8 373.4 100" fill="none" stroke="#d4d4d4" stroke-width="2.6" stroke-linecap="round" stroke-linejoin="round" /></svg>
<svg style="left:0;top:0" width="1" height="1"><path d="M464.95 86.2 L465.4 97 L473 103.7 L463.8 107.2 L460 117.5 L454.3 109.2 L443.9 108.5 L449.1 99.4 L446.5 89.2 L456.4 92.4 Z" fill="none" stroke="#d4d4d4" stroke-width="2.6" stroke-linecap="round" stroke-linejoin="round" /><path d="M468.1 111.8 L471.9 115.8" fill="none" stroke="#d4d4d4" stroke-width="2.6" stroke-linecap="round" stroke-linejoin="round" /></svg>
<svg style="left:0;top:0" width="1" height="1"><path d="M554.2 89.6 V114.4 L581.8 89.6 V114.4 Z" fill="none" stroke="#d4d4d4" stroke-width="2.6" stroke-linecap="round" stroke-linejoin="round" /></svg>
<svg style="left:0;top:0" width="1" height="1"><rect x="663.4" y="89.8" width="29" height="24.4" rx="1.5" fill="none" stroke="#d4d4d4" stroke-width="2.6"/><path d="M667.3 102.6 H683.2 M685.9 102.6 H689 M667.3 108 H670.6 M673.2 108 H689" fill="none" stroke="#d4d4d4" stroke-width="2.4" stroke-linecap="round" stroke-linejoin="round" stroke-linecap="butt"/></svg>
<svg style="left:0;top:0" width="1" height="1"><path d="M771.8 95.7 A7.4 7.4 0 1 1 782.56 102.29 M775.16 101.01 A7.4 7.4 0 1 0 775.16 114.19 M777.66 106.92 A7.4 7.4 0 1 0 789.19 102.14" fill="none" stroke="#d4d4d4" stroke-width="2.8" stroke-linecap="round" stroke-linejoin="round" stroke-linecap="butt"/></svg>
<svg style="left:0;top:0" width="1" height="1"><path d="M877.2 93.2 H889.6 M900.2 93.2 H905.4 M877.2 111.2 H880.8 M891.4 111.2 H905.4" fill="none" stroke="#d4d4d4" stroke-width="2.6" stroke-linecap="round" stroke-linejoin="round" /><circle cx="894.9" cy="93.2" r="4.3" fill="none" stroke="#d4d4d4" stroke-width="2.6"/><circle cx="886.1" cy="111.2" r="4.3" fill="none" stroke="#d4d4d4" stroke-width="2.6"/></svg>
<div class="t" style="left:37px;top:122.6px;font-size:21px;color:#00b8c8;letter-spacing:0.19px;">Media</div>
<div class="t" style="left:137px;top:122.6px;font-size:21px;color:#dedede;">Audio</div>
<div class="t" style="left:243px;top:122.6px;font-size:21px;color:#dedede;letter-spacing:0.25px;">Text</div>
<div class="t" style="left:322px;top:122.6px;font-size:21px;color:#dedede;letter-spacing:0.18px;">Stickers</div>
<div class="t" style="left:425px;top:122.6px;font-size:21px;color:#dedede;letter-spacing:0.56px;">Effects</div>
<div class="t" style="left:518px;top:122.6px;font-size:21px;color:#dedede;">Transitions</div>
<div class="t" style="left:637px;top:122.6px;font-size:21px;color:#dedede;letter-spacing:0.21px;">Captions</div>
<div class="t" style="left:750px;top:122.6px;font-size:21px;color:#dedede;letter-spacing:0.16px;">Filters</div>
<div class="t" style="left:838px;top:122.6px;font-size:21px;color:#dedede;letter-spacing:0.28px;">Adjustment</div>
<div class="t" style="left:962.5px;top:122.6px;font-size:21px;width:23px;overflow:hidden;color:#e4e4e4">Templates</div>
<div class="abs" style="left:975px;top:118px;width:21px;height:32px;background:linear-gradient(90deg,rgba(45,45,45,0),#2d2d2d 70%);"></div>
<div class="abs" style="left:996px;top:94.5px;width:24px;height:40px;background:#454545;border-radius:7px;"></div>
<svg style="left:0;top:0" width="1" height="1"><path d="M1005.2 108.2 L1012 114.8 L1005.2 121.4" fill="none" stroke="#d4d4d4" stroke-width="2.6" stroke-linecap="round" stroke-linejoin="round" /></svg>
<div class="abs" style="left:34px;top:186px;width:208px;height:48px;background:#363636;border-radius:10px;"></div>
<div class="t" style="left:49px;top:199.15px;font-size:22.5px;color:#e4e4e4;letter-spacing:1.21px;">Import</div>
<svg style="left:0;top:0" width="1" height="1"><path d="M213.3 207.7 L218 212.3 L222.7 207.7" fill="none" stroke="#d8d8d8" stroke-width="2.8" stroke-linecap="round" stroke-linejoin="round"/></svg>
<div class="abs" style="left:34px;top:250px;width:208px;height:48px;background:#363636;border-radius:10px;"></div>
<div class="t" style="left:50px;top:263.15px;font-size:22.5px;color:#e4e4e4;letter-spacing:0.31px;">Yours</div>
<svg style="left:0;top:0" width="1" height="1"><path d="M213.3 271.7 L218 276.3 L222.7 271.7" fill="none" stroke="#d8d8d8" stroke-width="2.8" stroke-linecap="round" stroke-linejoin="round"/></svg>
<div class="abs" style="left:34px;top:314px;width:208px;height:48px;background:#363636;border-radius:10px;"></div>
<div class="t" style="left:51px;top:327.15px;font-size:22.5px;color:#00b8c8;letter-spacing:-0.11px;">AI media</div>
<svg style="left:0;top:0" width="1" height="1"><path d="M213.3 340.3 L218 335.7 L222.7 340.3" fill="none" stroke="#00b8c8" stroke-width="2.8" stroke-linecap="round" stroke-linejoin="round"/></svg>
<div class="abs" style="left:34px;top:570px;width:208px;height:48px;background:#363636;border-radius:10px;"></div>
<div class="t" style="left:50px;top:583.15px;font-size:22.5px;color:#e4e4e4;letter-spacing:0.21px;">Spaces</div>
<svg style="left:0;top:0" width="1" height="1"><path d="M213.3 591.7 L218 596.3 L222.7 591.7" fill="none" stroke="#d8d8d8" stroke-width="2.8" stroke-linecap="round" stroke-linejoin="round"/></svg>
<div class="abs" style="left:34px;top:634px;width:208px;height:48px;background:#363636;border-radius:10px;"></div>
<div class="t" style="left:49px;top:647.15px;font-size:22.5px;color:#e4e4e4;letter-spacing:0.42px;">Library</div>
<svg style="left:0;top:0" width="1" height="1"><path d="M213.3 655.7 L218 660.3 L222.7 655.7" fill="none" stroke="#d8d8d8" stroke-width="2.8" stroke-linecap="round" stroke-linejoin="round"/></svg>
<div class="t" style="left:51px;top:390.55px;font-size:22.5px;color:#00b8c8;">AI image</div>
<div class="t" style="left:51px;top:454.55px;font-size:22.5px;color:#dedede;letter-spacing:0.35px;">AI video</div>
<div class="t" style="left:51px;top:518.85px;font-size:22.5px;color:#dedede;letter-spacing:0.24px;">AI dialogue scene</div>
<div class="t" style="left:283px;top:193.05px;font-size:22.5px;color:#dedede;letter-spacing:0.93px;">Prompt</div>
<svg style="left:0;top:0" width="1" height="1"><circle cx="379.1" cy="204.2" r="8.9" fill="none" stroke="#8a8a8a" stroke-width="1.7"/><path d="M379.1 203 V208.6 M377.4 203 H379.1 M377.2 208.8 H381" fill="none" stroke="#8a8a8a" stroke-width="1.5" stroke-linecap="round" stroke-linejoin="round" stroke-linecap="butt"/><circle cx="379" cy="199.6" r="1.2" fill="#8a8a8a"/></svg>
<div class="t" style="left:876px;top:193.05px;font-size:22.5px;color:#8f8f8f;letter-spacing:0.19px;">Showcase</div>
<svg style="left:0;top:0" width="1" height="1"><path d="M992.2 196.6 L1000 204.2 L992.2 211.8" fill="none" stroke="#8f8f8f" stroke-width="2.4" stroke-linecap="round" stroke-linejoin="round" /></svg>
<div class="abs" style="left:283px;top:236px;width:725px;height:304px;background:#191919;border-radius:16px;"></div>
<div class="t" style="left:311px;top:259.2px;font-size:23.33px;color:#e0e0e0;letter-spacing:0.79px;-webkit-text-stroke:0.15px;">Anthropomorphic axolotls, with pink frilled gills and round</div>
<div class="t" style="left:311px;top:287.2px;font-size:23.33px;color:#e0e0e0;letter-spacing:0.64px;-webkit-text-stroke:0.15px;">black eyes, are illustrated in a storybook style. They're</div>
<div class="t" style="left:311px;top:315.2px;font-size:23.33px;color:#e0e0e0;letter-spacing:0.69px;-webkit-text-stroke:0.15px;">transformed into bakers, laboriously rolling out a giant ball of</div>
<div class="t" style="left:311px;top:343.2px;font-size:23.33px;color:#e0e0e0;letter-spacing:0.69px;-webkit-text-stroke:0.15px;">dough with an absurdly large rolling pin. The first axolotl,</div>
<div class="t" style="left:311px;top:371.2px;font-size:23.33px;color:#e0e0e0;letter-spacing:0.74px;-webkit-text-stroke:0.15px;">covered in flour, its small face etched with determination,</div>
<div class="t" style="left:311px;top:399.2px;font-size:23.33px;color:#e0e0e0;letter-spacing:0.79px;-webkit-text-stroke:0.15px;">pushes with all its might. Another stands atop the rolling pin,</div>
<div class="t" style="left:311px;top:427.2px;font-size:23.33px;color:#e0e0e0;letter-spacing:0.7px;-webkit-text-stroke:0.15px;">trying to maintain its balance as it rolls back and forth. The</div>
<div class="t" style="left:282px;top:612.75px;font-size:22.5px;color:#dedede;letter-spacing:0.5px;">Model</div>
<div class="abs" style="left:488.4px;top:576px;width:519.6px;height:96px;background:#363636;border-radius:10px;"></div>
<svg style="left:488.4px;top:576px;border-radius:10px 3px 3px 10px;overflow:hidden" width="96" height="96" viewBox="0 0 96 96"><defs><g id="girl"><rect width="48" height="48" fill="#c3e010"/><path d="M0 0 H16 Q10 14 12 30 L0 36 Z" fill="#8fd3e4"/><path d="M2 48 Q8 34 22 32 L34 32 Q44 34 48 44 V48 Z" fill="#d2e60e"/><rect x="19" y="26" width="14" height="8" fill="#e9c3ad"/><path d="M14 31 Q26 38 40 31 L40 35 Q26 42 14 35 Z" fill="#ff3d98"/><ellipse cx="27" cy="17" rx="9.5" ry="11.5" fill="#ecc9b4"/><path d="M15 18 Q14 3 27 3 Q40 3 39 17 Q36 9 27 10 Q19 9 17.500 22 Z" fill="#2a1d1a"/><path d="M20 12 Q27 8 35 12 L35 9 Q27 4 19 9 Z" fill="#2a1d1a"/><ellipse cx="23" cy="18" rx="1.6" ry="1" fill="#3a2420"/><ellipse cx="31.500" cy="18" rx="1.600" ry="1" fill="#3a2420"/><ellipse cx="27.500" cy="24" rx="2" ry="1" fill="#c8606a"/><ellipse cx="21.500" cy="21" rx="2.200" ry="1.300" fill="#f09aa8" opacity=".7"/><ellipse cx="33" cy="21" rx="2.200" ry="1.300" fill="#f09aa8" opacity=".7"/></g></defs><use href="#girl"/><use href="#girl" transform="translate(96 0) scale(-1 1)"/><use href="#girl" y="48"/><use href="#girl" transform="translate(96 48) scale(-1 1)"/><path d="M47.800 0 V96 M0 47.200 H96" stroke="#f2f2e8" stroke-width="1.300"/></svg>
<div class="t" style="left:600px;top:597.25px;font-size:22.5px;color:#dedede;letter-spacing:0.57px;">Image 4.0</div>
<div class="t" style="left:601px;top:633.15px;font-size:22.5px;color:#8c8c8c;">Create a cohesive set of images. ...</div>
<svg style="left:0;top:0" width="1" height="1"><path d="M984.6 619.3 L989.9 624.3 L995.2 619.3" fill="none" stroke="#e0e0e0" stroke-width="3" stroke-linecap="round" stroke-linejoin="round"/></svg>
<div class="t" style="left:284px;top:714.95px;font-size:22.5px;color:#dedede;letter-spacing:0.54px;">Aspect ratio</div>
<div class="abs" style="left:488.4px;top:704px;width:519.6px;height:44px;background:#363636;border-radius:10px;"></div>
<div class="t" style="left:505px;top:714.95px;font-size:22.5px;color:#dedede;letter-spacing:0.58px;">Original</div>
<svg style="left:0;top:0" width="1" height="1"><path d="M984.6 724.8 L989.9 729.8 L995.2 724.8" fill="none" stroke="#e0e0e0" stroke-width="3" stroke-linecap="round" stroke-linejoin="round"/></svg>
<div class="abs" style="left:804.6px;top:1124px;width:203.4px;height:48px;background:#eeeeee;border-radius:9px;"></div>
<div class="abs" style="left:821px;top:1133px;width:31px;height:30px;border-radius:50%;background:radial-gradient(circle at 72% 58%,#5638e4 0%,#6656e6 28%,rgba(110,96,232,0) 62%),radial-gradient(circle at 42% 52%,#5cc4d8 0%,#86d2e2 48%,rgba(134,210,226,0) 72%);filter:blur(1.4px)"></div>
<div class="t" style="left:868px;top:1136.35px;font-size:22.5px;color:#0a0a0a;letter-spacing:0.33px;-webkit-text-stroke:0px;">Regenerate</div>
<!-- ===== player ===== -->
<div class="abs" style="left:1046px;top:72px;width:962px;height:1116px;background:#222222;border-radius:20px;overflow:hidden;"><div class="abs" style="left:0;top:0;width:962px;height:83px;background:#2d2d2d"></div><div class="abs" style="left:0;top:83px;width:962px;height:1px;background:#070707"></div><div class="abs" style="left:16px;top:84px;width:930px;height:891px;background:#262626"></div></div>
<div class="t" style="left:1070px;top:101.6px;font-size:24px;color:#e8e8e8;-webkit-text-stroke:0px;">Player</div>
<div class="abs" style="left:1949px;top:101.2px;width:26.2px;height:2.5px;background:#5c5c5c;"></div>
<div class="abs" style="left:1949px;top:111.4px;width:26.2px;height:2.5px;background:#5c5c5c;"></div>
<div class="abs" style="left:1949px;top:121.2px;width:26.2px;height:2.5px;background:#5c5c5c;"></div>
<div class="abs" style="left:1062px;top:156px;width:930px;height:891px;overflow:hidden"><svg style="left:-1.7px;top:185px" width="933.4" height="524.8" viewBox="0 0 930 524" preserveAspectRatio="none"><use href="#scene"/></svg><div class="abs" style="left:0.1px;top:186.4px;width:929.8px;height:523.4px;border:2.5px solid #ffffff"></div><div class="abs" style="left:-9px;top:177px;width:18.4px;height:18.4px;border-radius:50%;background:#dedede"></div><div class="abs" style="left:920.6px;top:177px;width:18.4px;height:18.4px;border-radius:50%;background:#dedede"></div><div class="abs" style="left:-9px;top:700.6px;width:18.4px;height:18.4px;border-radius:50%;background:#dedede"></div><div class="abs" style="left:920.6px;top:700.6px;width:18.4px;height:18.4px;border-radius:50%;background:#dedede"></div></div>
<div class="abs" style="left:1092px;top:358px;width:80.7px;height:19.6px;background:transparent;border-radius:9.8px;border:1.1px solid rgba(255,255,255,.42);"></div>
<div class="t" style="left:1098px;top:361.35px;font-size:13.5px;color:rgba(255,255,255,.5);letter-spacing:-0.26px;-webkit-text-stroke:0px;">AI Generate</div>
<div class="abs" style="left:1512px;top:896.7px;width:32px;height:32px;background:#ffffff;border-radius:16px;"></div>
<svg style="left:0;top:0" width="1" height="1"><path d="M1519.6 912 A8.6 8.6 0 0 1 1535.6 908 M1536.4 913.4 A8.6 8.6 0 0 1 1520.4 917.4" fill="none" stroke="#111" stroke-width="2.6" stroke-linecap="round" stroke-linejoin="round" stroke-linecap="butt"/><path d="M1531.6 908.8 L1539.4 904.6 L1538.6 912.8 Z M1524.4 916.6 L1516.6 920.8 L1517.4 912.6 Z" fill="#111"/></svg>
<div class="t" style="left:1063px;top:1133.75px;font-size:22.5px;color:#00b4c4;letter-spacing:1.09px;-webkit-text-stroke:0px;">00:00:00:00</div>
<svg style="left:0;top:0" width="1" height="1"><path d="M1205.4 1135 L1199.2 1154.2" fill="none" stroke="#4c4c4c" stroke-width="1.6" stroke-linecap="round" stroke-linejoin="round" /></svg>
<div class="t" style="left:1216px;top:1133.75px;font-size:22.5px;color:#dcdcdc;letter-spacing:1.05px;-webkit-text-stroke:0px;">00:00:03:00</div>
<div class="abs" style="left:1368.1px;top:1127.9px;width:19.6px;height:4.4px;background:#303030;border-radius:2px;"></div>
<div class="abs" style="left:1368.1px;top:1134.7px;width:19.6px;height:4.4px;background:#303030;border-radius:2px;"></div>
<div class="abs" style="left:1368.1px;top:1141.5px;width:19.6px;height:4.4px;background:#303030;border-radius:2px;"></div>
<div class="abs" style="left:1368.1px;top:1148.3px;width:19.6px;height:4.4px;background:#303030;border-radius:2px;"></div>
<div class="abs" style="left:1368.1px;top:1155.1px;width:19.6px;height:4.4px;background:#303030;border-radius:2px;"></div>
<div class="abs" style="left:1392.2px;top:1127.9px;width:19.6px;height:4.4px;background:#303030;border-radius:2px;"></div>
<div class="abs" style="left:1392.2px;top:1134.7px;width:19.6px;height:4.4px;background:#303030;border-radius:2px;"></div>
<div class="abs" style="left:1392.2px;top:1141.5px;width:19.6px;height:4.4px;background:#303030;border-radius:2px;"></div>
<div class="abs" style="left:1392.2px;top:1148.3px;width:19.6px;height:4.4px;background:#303030;border-radius:2px;"></div>
<div class="abs" style="left:1392.2px;top:1155.1px;width:19.6px;height:4.4px;background:#303030;border-radius:2px;"></div>
<svg style="left:0;top:0" width="1" height="1"><path d="M1520.4 1133.6 L1536.8 1143 Q1538 1143.9 1536.8 1144.8 L1520.4 1154.2 Q1519.200 1154.6 1519.2 1153.4 V1134.4 Q1519.2 1133.2 1520.4 1133.6 Z" fill="#c9c9c9"/></svg>
<div class="abs" style="left:1747.9px;top:1132px;width:38.5px;height:23.8px;background:transparent;border-radius:2.5px;border:2px solid #d2d2d2;"></div>
<div class="t" style="left:1752px;top:1133.8px;font-size:20px;color:#d8d8d8;-webkit-text-stroke:0px;">Full</div>
<svg style="left:0;top:0" width="1" height="1"><path d="M1814.8 1135.4 V1129 H1821.4 M1838.6 1129 H1845.2 V1135.4 M1845.2 1152.4 V1158.8 H1838.6 M1821.4 1158.8 H1814.8 V1152.4" fill="none" stroke="#c9c9c9" stroke-width="2.4" stroke-linecap="round" stroke-linejoin="round" stroke-linecap="butt" stroke-linejoin="miter"/><circle cx="1828.9" cy="1143.2" r="8" fill="none" stroke="#c9c9c9" stroke-width="2.5"/><path d="M1835 1149.6 L1839.4 1154.2" fill="none" stroke="#c9c9c9" stroke-width="2.5" stroke-linecap="round" stroke-linejoin="round" /></svg>
<div class="abs" style="left:1874px;top:1132px;width:55px;height:23.8px;background:transparent;border-radius:2.5px;border:2px solid #d2d2d2;"></div>
<div class="t" style="left:1878px;top:1133.8px;font-size:20px;color:#d8d8d8;letter-spacing:0.42px;-webkit-text-stroke:0px;">Ratio</div>
<div class="abs" style="left:1946px;top:1136px;width:1.4px;height:16px;background:#2e2e2e;"></div>
<svg style="left:0;top:0" width="1" height="1"><path d="M1966.6 1140.4 V1132.6 H1974 M1982 1155 H1989.6 V1147.4 M1989.6 1132.600 H1982.4 M1989.6 1132.6 V1139.800 M1989.4 1132.8 L1980.4 1141.8 M1966.8 1155 L1975.800 1146 M1966.6 1155 H1973.8 M1966.6 1155 V1147.8" fill="none" stroke="#c9c9c9" stroke-width="2.4" stroke-linecap="round" stroke-linejoin="round" stroke-linecap="butt" stroke-linejoin="miter"/></svg>
<!-- ===== right panel ===== -->
<div class="abs" style="left:2022px;top:72px;width:840px;height:1116px;background:#222222;border-radius:20px;overflow:hidden;"><div class="abs" style="left:0;top:0;width:840px;height:83px;background:#2d2d2d"></div><div class="abs" style="left:0;top:83px;width:840px;height:1px;background:#070707"></div><div class="abs" style="left:0;top:1044px;width:840px;height:72px;background:#2e2e2e"></div></div>
<div class="t" style="left:2046px;top:102.1px;font-size:24px;color:#00b8c8;letter-spacing:0.19px;">AI media</div>
<div class="t" style="left:2196px;top:102.1px;font-size:24px;color:#dcdcdc;letter-spacing:0.5px;">Video</div>
<div class="t" style="left:2313px;top:102.1px;font-size:24px;color:#dcdcdc;letter-spacing:1.03px;">Animation</div>
<div class="t" style="left:2480px;top:102.1px;font-size:24px;color:#dcdcdc;letter-spacing:0.83px;">Adjust</div>
<div class="t" style="left:2605px;top:102.1px;font-size:24px;color:#dcdcdc;letter-spacing:0.68px;">AI stylize</div>
<div class="t" style="left:2047px;top:197.95px;font-size:22.5px;color:#dcdcdc;letter-spacing:0.11px;">AI image</div>
<svg style="left:0;top:0" width="1" height="1"><path d="M2144.1 214.2 L2152.2 206.4 L2160.2 214.2 Z" fill="#8c8c8c"/></svg>
<div class="abs" style="left:2046px;top:264px;width:124px;height:124px;border-radius:12px;overflow:hidden;background:#e8dcc8"><svg style="left:0;top:0" width="124" height="124" viewBox="210 0 524 524" preserveAspectRatio="xMidYMid slice"><use href="#scene" width="930" height="524"/></svg><div class="abs" style="left:0;top:0;width:124px;height:124px;border:4px solid #f1f1f1;border-radius:12px"></div></div>
<div class="abs" style="left:2202px;top:264px;width:124px;height:124px;border-radius:12px;overflow:hidden;background:#e8dcc8"><svg style="left:0;top:0" width="124" height="124" viewBox="0 0 124 124" preserveAspectRatio="xMidYMid slice"><use href="#scene2" width="124" height="124"/></svg></div>
<div class="abs" style="left:2358px;top:264px;width:124px;height:124px;border-radius:12px;overflow:hidden;background:#e8dcc8"><svg style="left:0;top:0" width="124" height="124" viewBox="0 0 124 124" preserveAspectRatio="xMidYMid slice"><use href="#scene3" width="124" height="124"/></svg></div>
<div class="abs" style="left:2514px;top:264px;width:124px;height:124px;border-radius:12px;overflow:hidden;background:#e8dcc8"><svg style="left:0;top:0" width="124" height="124" viewBox="0 0 124 124" preserveAspectRatio="xMidYMid slice"><use href="#scene4" width="124" height="124"/></svg></div>
<div class="abs" style="left:2151px;top:358px;width:259px;height:207.4px;background:#2e2e2e;border-radius:12px;border:1.2px solid #0c0c0c;box-shadow:0 14px 56px 14px rgba(0,0,0,.42);"></div>
<div class="abs" style="left:2161.5px;top:436px;width:231px;height:52px;background:#404040;border-radius:6px;"></div>
<div class="abs" style="left:2142.4px;top:428.2px;width:257.8px;height:67.8px;background:transparent;border-radius:12px;border:8px solid #f24b4b;"></div>
<div class="t" style="left:2178px;top:385.25px;font-size:24.5px;color:#e4e4e4;letter-spacing:0.49px;-webkit-text-stroke:0px;">Download</div>
<div class="t" style="left:2178px;top:449.45px;font-size:24.5px;color:#e4e4e4;letter-spacing:0.3px;-webkit-text-stroke:0px;">Image to video</div>
<div class="t" style="left:2178px;top:513.55px;font-size:24.5px;color:#e4e4e4;letter-spacing:0.38px;-webkit-text-stroke:0px;">Report</div>
<div class="abs" style="left:2534px;top:1130px;width:144px;height:44px;background:#484848;border-radius:9px;"></div>
<div class="abs" style="left:2694px;top:1130px;width:144px;height:44px;background:#484848;border-radius:9px;"></div>
<div class="t" style="left:2569px;top:1139.85px;font-size:22.5px;color:#ececec;letter-spacing:1.39px;-webkit-text-stroke:0.25px;">Modify</div>
<div class="t" style="left:2705px;top:1139.85px;font-size:22.5px;color:#ececec;letter-spacing:0.32px;-webkit-text-stroke:0.25px;">Regenerate</div>
<!-- ===== timeline ===== -->
<div class="abs" style="left:18px;top:1200px;width:2844px;height:606px;background:#222222;"></div>
<div class="abs" style="left:18px;top:1264px;width:2844px;height:1px;background:#000000;"></div>
<div class="abs" style="left:18px;top:1477px;width:2832px;height:152px;background:#2a2a2a;"></div>
<div class="abs" style="left:264.6px;top:1321px;width:2px;height:485px;background:#141414;"></div>
<svg style="left:0;top:0" width="1" height="1"><path d="M41 1220.8 L58.6 1230 L50.6 1233.4 L55.4 1242.400 L51.200 1244.600 L46.4 1235.6 L41.4 1241.2 Z" fill="none" stroke="#cacaca" stroke-width="2.5" stroke-linecap="round" stroke-linejoin="round" /></svg>
<svg style="left:0;top:0" width="1" height="1"><path d="M89.9 1231.8 L95.6 1237 L101.3 1231.8" fill="none" stroke="#e2e2e2" stroke-width="3" stroke-linecap="round" stroke-linejoin="round"/></svg>
<div class="abs" style="left:130.4px;top:1216.2px;width:1.6px;height:31.6px;background:#3a3a3a;"></div>
<svg style="left:0;top:0" width="1" height="1"><path d="M169.8 1219.400 L161.8 1228.6 L169.4 1237 M162.400 1228.7 H175.6 A6.85 6.85 0 0 1 175.6 1242.4 H162" fill="none" stroke="#cacaca" stroke-width="2.6" stroke-linecap="round" stroke-linejoin="round" /></svg>
<svg style="left:0;top:0" width="1" height="1"><path d="M246.6 1219.4 L254.6 1228.6 L247 1237 M254 1228.7 H240.8 A6.85 6.85 0 0 0 240.8 1242.4 H254.4" fill="none" stroke="#545454" stroke-width="2.6" stroke-linecap="round" stroke-linejoin="round" /></svg>
<svg style="left:0;top:0" width="1" height="1"><path d="M303.4 1221.8 H312 V1242.4 H303.4" fill="none" stroke="#cacaca" stroke-width="2.7" stroke-linecap="round" stroke-linejoin="round" stroke-linecap="butt" stroke-linejoin="miter"/><path d="M329.4 1221.8 H320.8 V1242.4 H329.4" fill="none" stroke="#cacaca" stroke-width="2.7" stroke-linecap="round" stroke-linejoin="round" stroke-linecap="butt" stroke-linejoin="miter"/></svg>
<svg style="left:0;top:0" width="1" height="1"><path d="M375.8 1221.8 H384.4 V1242.4 H375.8" fill="none" stroke="#555" stroke-width="2.7" stroke-linecap="round" stroke-linejoin="round" stroke-linecap="butt" stroke-linejoin="miter" stroke-dasharray="4.6 3.2"/><path d="M401.2 1221.8 H392.6 V1242.4 H401.2" fill="none" stroke="#cacaca" stroke-width="2.7" stroke-linecap="round" stroke-linejoin="round" stroke-linecap="butt" stroke-linejoin="miter"/></svg>
<svg style="left:0;top:0" width="1" height="1"><path d="M447.8 1221.8 H456.4 V1242.4 H447.8" fill="none" stroke="#cacaca" stroke-width="2.7" stroke-linecap="round" stroke-linejoin="round" stroke-linecap="butt" stroke-linejoin="miter"/><path d="M472.8 1221.8 H464.2 V1242.4 H472.8" fill="none" stroke="#555" stroke-width="2.7" stroke-linecap="round" stroke-linejoin="round" stroke-linecap="butt" stroke-linejoin="miter" stroke-dasharray="4.6 3.2"/></svg>
<svg style="left:0;top:0" width="1" height="1"><path d="M519.6 1224.8 H544.4 M527 1219.4 H537 M523.4 1225.2 L524.8 1241.4 Q525 1243.8 527.4 1243.8 H536.6 Q539 1243.8 539.2 1241.4 L540.6 1225.2" fill="none" stroke="#cacaca" stroke-width="2.6" stroke-linecap="round" stroke-linejoin="round" /></svg>
<svg style="left:0;top:0" width="1" height="1"><path d="M594.6 1222.4 Q594.6 1219.9 597.2 1219.9 H611 Q613.6 1219.9 613.6 1222.4 V1234.6 L604.1 1242.8 L594.6 1234.6 Z" fill="none" stroke="#cacaca" stroke-width="2.6" stroke-linecap="round" stroke-linejoin="round" /></svg>
<svg style="left:0;top:0" width="1" height="1"><path d="M666.6 1217.6 V1241.4 H690.6 M661.6 1222.6 H686.2 V1246.600" fill="none" stroke="#cacaca" stroke-width="2.6" stroke-linecap="round" stroke-linejoin="round" /><path d="M672.6 1235.4 L680.4 1227.6" fill="none" stroke="#8a8a8a" stroke-width="2.4" stroke-linecap="round" stroke-linejoin="round" stroke-dasharray="3.6 3"/></svg>
<svg style="left:0;top:0" width="1" height="1"><path d="M744.4 1219.6 L734.2 1241.6 H744.4 Z M751.8 1219.6 L762 1241.6 H751.8 Z" fill="none" stroke="#cacaca" stroke-width="2.6" stroke-linecap="round" stroke-linejoin="round" /></svg>
<svg style="left:0;top:0" width="1" height="1"><path d="M807.4 1230.6 L820.2 1219.4 L829.400 1226.6 M822.8 1227.2 H830.4 V1219.4 M833 1233.4 L820.4 1245 L811 1237.800 M817.6 1237.400 H810 V1245.2" fill="none" stroke="#cacaca" stroke-width="2.6" stroke-linecap="round" stroke-linejoin="round" /></svg>
<div class="abs" style="left:868.2px;top:1216.2px;width:1.6px;height:31.6px;background:#3a3a3a;"></div>
<div class="abs" style="left:903.9px;top:1220px;width:28.3px;height:24px;background:#cfcfcf;border-radius:4.5px;"></div>
<div class="t" style="left:906.4px;top:1224.2px;width:24px;text-align:center;font-size:14.5px;font-weight:700;color:#222;transform:scale(1,1.22);letter-spacing:-0.3px;-webkit-text-stroke:0.3px">HD</div>
<svg style="left:0;top:0" width="1" height="1"><path d="M979.6 1240.6 L1000.600 1219.6" stroke="#c8c8c8" stroke-width="8.4" stroke-linecap="round"/><path d="M994.8 1225.4 L998.2 1222" stroke="#222" stroke-width="3" stroke-linecap="round"/><path d="M978.8 1215 L980.21 1219.99 L985.2 1221.4 L980.21 1222.81 L978.8 1227.8 L977.39 1222.81 L972.4 1221.4 L977.39 1219.99 Z" fill="#cacaca"/><path d="M1003 1214.8 L1003.92 1218.08 L1007.2 1219 L1003.92 1219.92 L1003 1223.2 L1002.08 1219.92 L998.8 1219 L1002.08 1218.08 Z" fill="#cacaca"/><path d="M999.6 1236 L1000.61 1239.59 L1004.2 1240.6 L1000.61 1241.61 L999.6 1245.2 L998.59 1241.61 L995 1240.6 L998.59 1239.59 Z" fill="#cacaca"/></svg>
<svg style="left:0;top:0" width="1" height="1"><rect x="1048.2" y="1217.8" width="5.6" height="5.6" fill="#444"/><rect x="1048.2" y="1229" width="5.6" height="5.6" fill="#444"/><rect x="1048.2" y="1240.2" width="5.6" height="5.6" fill="#444"/><rect x="1053.8" y="1223.4" width="5.6" height="5.6" fill="#444"/><rect x="1053.8" y="1234.6" width="5.6" height="5.6" fill="#444"/><rect x="1059.4" y="1217.8" width="5.6" height="5.6" fill="#444"/><rect x="1059.4" y="1229" width="5.6" height="5.6" fill="#444"/><rect x="1059.4" y="1240.2" width="5.6" height="5.6" fill="#444"/><rect x="1065" y="1223.4" width="5.6" height="5.6" fill="#444"/><rect x="1065" y="1234.6" width="5.6" height="5.6" fill="#444"/><rect x="1070.6" y="1217.8" width="5.6" height="5.6" fill="#444"/><rect x="1070.6" y="1229" width="5.6" height="5.6" fill="#444"/><rect x="1070.6" y="1240.2" width="5.6" height="5.6" fill="#444"/><circle cx="1062.100" cy="1228.6" r="5.6" fill="#c8c8c8"/><path d="M1051.8 1244.2 Q1051.8 1236.2 1062.1 1236.2 Q1072.4 1236.2 1072.400 1244.2 Z" fill="#c8c8c8"/><circle cx="1073.6" cy="1220.6" r="7.4" fill="#222"/><path d="M1073.6 1214 L1075.05 1219.15 L1080.2 1220.6 L1075.05 1222.05 L1073.6 1227.2 L1072.15 1222.05 L1067 1220.6 L1072.15 1219.15 Z" fill="#cacaca"/></svg>
<svg style="left:0;top:0" width="1" height="1"><path d="M2002 1219.6 Q2006.8 1219.6 2006.8 1224.4 V1232 Q2006.8 1236.8 2002 1236.8 Q1997.2 1236.8 1997.200 1232 V1224.4 Q1997.2 1219.6 2002 1219.6 Z M1992 1231.4 A10 10 0 0 0 2012 1231.4 M2002 1241.6 V1246" fill="none" stroke="#cacaca" stroke-width="2.6" stroke-linecap="round" stroke-linejoin="round" /></svg>
<div class="abs" style="left:2050.3px;top:1200px;width:1.6px;height:31.5px;background:#3a3a3a;"></div>
<div class="abs" style="left:2076px;top:1208px;width:48px;height:48px;background:#1a1a1a;border-radius:9px;"></div>
<svg style="left:0;top:0" width="1" height="1"><rect x="2082.3" y="1224.5" width="10.600" height="15" rx="3" fill="#00b8c8"/><rect x="2104.4" y="1224.5" width="13.200" height="15" rx="3" fill="#00b8c8"/><path d="M2094.4 1232 L2100 1227.600 V1236.4 Z" fill="#00b8c8"/><path d="M2099 1232 H2105" stroke="#00b8c8" stroke-width="2.6"/><path d="M2105 1232 H2113" stroke="#1a1a1a" stroke-width="2.600" stroke-linecap="round"/></svg>
<div class="abs" style="left:2148px;top:1208px;width:48px;height:48px;background:#1a1a1a;border-radius:9px;"></div>
<svg style="left:0;top:0" width="1" height="1"><rect x="2154.5" y="1224.5" width="35.100" height="15" rx="3.5" fill="#00b8c8"/><path d="M2172 1227.4 V1236.6" stroke="#1a1a1a" stroke-width="2.6"/><path d="M2172 1216 V1221 M2163.600 1218.2 L2166.6 1221.4 M2180.4 1218.2 L2177.4 1221.4 M2172 1243 V1248 M2163.6 1245.800 L2166.6 1242.6 M2180.4 1245.8 L2177.4 1242.6" fill="none" stroke="#00b8c8" stroke-width="2.4" stroke-linecap="round" stroke-linejoin="round" /></svg>
<div class="abs" style="left:2220px;top:1208px;width:48px;height:48px;background:#1a1a1a;border-radius:9px 0 0 9px;"></div>
<div class="abs" style="left:2269.6px;top:1208px;width:26.4px;height:48px;background:#111111;border-radius:0 9px 9px 0;"></div>
<svg style="left:0;top:0" width="1" height="1"><rect x="2226.5" y="1224.5" width="16.400" height="15" rx="3.5" fill="#00b8c8"/><rect x="2245.4" y="1224.5" width="16.4" height="15" rx="3.5" fill="#00b8c8"/><path d="M2234.5 1232 H2253.800" stroke="#1a1a1a" stroke-width="7" stroke-linecap="round"/><path d="M2236 1232 H2252.200" stroke="#00b8c8" stroke-width="2.6" stroke-linecap="round"/></svg>
<svg style="left:0;top:0" width="1" height="1"><path d="M2277.7 1229.8 L2283.5 1235 L2289.3 1229.8" fill="none" stroke="#e2e2e2" stroke-width="3" stroke-linecap="round" stroke-linejoin="round"/></svg>
<svg style="left:0;top:0" width="1" height="1"><path d="M2340.6 1226 H2328 V1238.6 H2340.600 M2344.2 1218.6 V1245 M2347.6 1226 H2359.600 V1232.4" fill="none" stroke="#b4b4b4" stroke-width="2.6" stroke-linecap="round" stroke-linejoin="round" stroke-linecap="butt" stroke-linejoin="miter"/><path d="M2349.8 1233.8 L2360.8 1240 L2356 1241.4 L2358.800 1246.800 L2356 1248.2 L2353.200 1242.800 L2349.8 1246.4 Z" fill="#b4b4b4"/></svg>
<svg style="left:0;top:0" width="1" height="1"><path d="M2377.8 1229.8 L2383.6 1235 L2389.4 1229.8" fill="none" stroke="#e2e2e2" stroke-width="3" stroke-linecap="round" stroke-linejoin="round"/></svg>
<div class="abs" style="left:2420px;top:1200px;width:1.6px;height:31.5px;background:#3a3a3a;"></div>
<svg style="left:0;top:0" width="1" height="1"><path d="M2462.6 1236.4 H2456.6 Q2454 1236.4 2454 1233.8 V1224.4 Q2454 1221.8 2456.600 1221.8 H2483.4 Q2486 1221.8 2486 1224.4 V1233.8 Q2486 1236.4 2483.4 1236.4 H2481.6 M2461.400 1222.4 V1227.4 M2468 1222.4 V1226 M2474.600 1222.400 V1227.4 M2481 1222.4 V1226" fill="none" stroke="#cacaca" stroke-width="2.5" stroke-linecap="round" stroke-linejoin="round" /><circle cx="2469.9" cy="1237.2" r="4.5" fill="none" stroke="#cacaca" stroke-width="2.5"/><path d="M2473.4 1240.6 L2477.2 1244" fill="none" stroke="#cacaca" stroke-width="2.5" stroke-linecap="round" stroke-linejoin="round" /></svg>
<svg style="left:0;top:0" width="1" height="1"><circle cx="2541.300" cy="1231.4" r="12.1" fill="none" stroke="#cacaca" stroke-width="2.6"/><path d="M2535.600 1231.4 H2547 M2550 1240 L2554.2 1244.2" fill="none" stroke="#cacaca" stroke-width="2.6" stroke-linecap="round" stroke-linejoin="round" /></svg>
<div class="abs" style="left:2590.2px;top:1229.6px;width:29.8px;height:4.4px;background:#d2d2d2;border-radius:2.2px;"></div>
<div class="abs" style="left:2620px;top:1229.6px;width:162.1px;height:4.4px;background:#000000;border-radius:2.2px;"></div>
<div class="abs" style="left:2612.8px;top:1219.8px;width:16.1px;height:24.3px;background:#e9e9e9;border-radius:7px;"></div>
<svg style="left:0;top:0" width="1" height="1"><circle cx="2829.700" cy="1231.4" r="12.1" fill="none" stroke="#cacaca" stroke-width="2.6"/><path d="M2824 1231.400 H2835.4 M2829.7 1225.7 V1237.100 M2838.4 1240 L2842.600 1244.2" fill="none" stroke="#cacaca" stroke-width="2.6" stroke-linecap="round" stroke-linejoin="round" /></svg>
<div class="abs" style="left:375.9px;top:1267px;width:873.9px;height:2px;background:#4a3a06;"></div>
<svg style="left:0;top:0" width="1" height="1"><rect x="414.31" y="1273" width="1.5" height="10.6" fill="#3e3e3e"/><rect x="463.37" y="1273" width="1.5" height="10.6" fill="#3e3e3e"/><rect x="512.42" y="1273" width="1.5" height="10.6" fill="#3e3e3e"/><rect x="561.48" y="1273" width="1.5" height="10.6" fill="#3e3e3e"/><rect x="610.54" y="1273" width="1.5" height="10.6" fill="#3e3e3e"/><rect x="659.6" y="1273" width="1.5" height="10.6" fill="#3e3e3e"/><rect x="708.66" y="1273" width="1.5" height="10.6" fill="#3e3e3e"/><rect x="757.72" y="1273" width="1.5" height="10.6" fill="#3e3e3e"/><rect x="806.78" y="1273" width="1.5" height="10.6" fill="#3e3e3e"/><rect x="855.83" y="1273" width="1.5" height="10.6" fill="#3e3e3e"/><rect x="904.89" y="1273" width="1.5" height="10.6" fill="#3e3e3e"/><rect x="953.5" y="1273" width="2.4" height="20.400" fill="#565656"/><rect x="1003.01" y="1273" width="1.5" height="10.6" fill="#3e3e3e"/><rect x="1052.07" y="1273" width="1.5" height="10.6" fill="#3e3e3e"/><rect x="1101.12" y="1273" width="1.5" height="10.6" fill="#3e3e3e"/><rect x="1150.18" y="1273" width="1.5" height="10.6" fill="#3e3e3e"/><rect x="1199.24" y="1273" width="1.5" height="10.6" fill="#3e3e3e"/><rect x="1248.3" y="1273" width="1.5" height="10.6" fill="#3e3e3e"/><rect x="1297.36" y="1273" width="1.5" height="10.6" fill="#3e3e3e"/><rect x="1346.42" y="1273" width="1.5" height="10.6" fill="#3e3e3e"/><rect x="1395.48" y="1273" width="1.5" height="10.6" fill="#3e3e3e"/><rect x="1444.53" y="1273" width="1.5" height="10.6" fill="#3e3e3e"/><rect x="1493.59" y="1273" width="1.5" height="10.6" fill="#3e3e3e"/><rect x="1542.2" y="1273" width="2.4" height="20.400" fill="#565656"/><rect x="1591.71" y="1273" width="1.5" height="10.6" fill="#3e3e3e"/><rect x="1640.77" y="1273" width="1.5" height="10.6" fill="#3e3e3e"/><rect x="1689.83" y="1273" width="1.5" height="10.6" fill="#3e3e3e"/><rect x="1738.88" y="1273" width="1.5" height="10.6" fill="#3e3e3e"/><rect x="1787.94" y="1273" width="1.5" height="10.6" fill="#3e3e3e"/><rect x="1837" y="1273" width="1.5" height="10.6" fill="#3e3e3e"/><rect x="1886.06" y="1273" width="1.5" height="10.6" fill="#3e3e3e"/><rect x="1935.12" y="1273" width="1.5" height="10.6" fill="#3e3e3e"/><rect x="1984.18" y="1273" width="1.5" height="10.6" fill="#3e3e3e"/><rect x="2033.23" y="1273" width="1.5" height="10.6" fill="#3e3e3e"/><rect x="2082.29" y="1273" width="1.5" height="10.6" fill="#3e3e3e"/><rect x="2130.9" y="1273" width="2.4" height="20.400" fill="#565656"/><rect x="2180.41" y="1273" width="1.5" height="10.6" fill="#3e3e3e"/><rect x="2229.47" y="1273" width="1.5" height="10.6" fill="#3e3e3e"/><rect x="2278.53" y="1273" width="1.5" height="10.6" fill="#3e3e3e"/><rect x="2327.58" y="1273" width="1.5" height="10.6" fill="#3e3e3e"/><rect x="2376.64" y="1273" width="1.5" height="10.6" fill="#3e3e3e"/><rect x="2425.7" y="1273" width="1.5" height="10.6" fill="#3e3e3e"/><rect x="2474.76" y="1273" width="1.5" height="10.6" fill="#3e3e3e"/><rect x="2523.82" y="1273" width="1.5" height="10.6" fill="#3e3e3e"/><rect x="2572.88" y="1273" width="1.5" height="10.6" fill="#3e3e3e"/><rect x="2621.93" y="1273" width="1.5" height="10.6" fill="#3e3e3e"/><rect x="2670.99" y="1273" width="1.5" height="10.6" fill="#3e3e3e"/><rect x="2719.6" y="1273" width="2.4" height="20.400" fill="#565656"/><rect x="2769.11" y="1273" width="1.5" height="10.6" fill="#3e3e3e"/><rect x="2818.17" y="1273" width="1.5" height="10.6" fill="#3e3e3e"/></svg>
<div class="t" style="left:376px;top:1273.75px;font-size:20.5px;color:#5e5e5e;letter-spacing:0.55px;-webkit-text-stroke:0px;">00:00</div>
<div class="t" style="left:963px;top:1273.75px;font-size:20.5px;color:#5e5e5e;letter-spacing:0.55px;-webkit-text-stroke:0px;">00:02</div>
<div class="t" style="left:1552px;top:1273.75px;font-size:20.5px;color:#5e5e5e;letter-spacing:0.55px;-webkit-text-stroke:0px;">00:04</div>
<div class="t" style="left:2141px;top:1273.75px;font-size:20.5px;color:#5e5e5e;letter-spacing:0.55px;-webkit-text-stroke:0px;">00:06</div>
<div class="t" style="left:2730px;top:1273.75px;font-size:20.5px;color:#5e5e5e;letter-spacing:0.55px;-webkit-text-stroke:0px;">00:08</div>
<svg style="left:0;top:0" width="1" height="1"><rect x="34.6" y="1544.8" width="22.6" height="17.2" fill="none" stroke="#4e4e4e" stroke-width="1.600"/><path d="M43.4 1549.6 L49.6 1553.4 L43.4 1557.200 Z" fill="#4e4e4e"/></svg>
<svg style="left:0;top:0" width="1" height="1"><rect x="87.2" y="1552.2" width="13.6" height="8.4" rx="1.4" fill="none" stroke="#e0e0e0" stroke-width="2.400"/><path d="M90.2 1552 V1549.4 Q90.2 1545.6 94 1545.600 Q97.4 1545.6 97.800 1548.2" fill="none" stroke="#e0e0e0" stroke-width="2.3" stroke-linecap="round" stroke-linejoin="round" /></svg>
<svg style="left:0;top:0" width="1" height="1"><path d="M132.6 1553.6 Q142 1544.400 151.4 1553.6 Q142 1562.8 132.6 1553.6 Z" fill="none" stroke="#e0e0e0" stroke-width="2.2" stroke-linecap="round" stroke-linejoin="round" /><circle cx="142" cy="1553.6" r="3.1" fill="none" stroke="#e0e0e0" stroke-width="2.2"/></svg>
<svg style="left:0;top:0" width="1" height="1"><path d="M180.8 1550.6 H184.6 L189.8 1546.8 V1560.4 L184.600 1556.600 H180.800 Z" fill="none" stroke="#e0e0e0" stroke-width="2" stroke-linecap="round" stroke-linejoin="round" /><path d="M193.4 1550.4 Q195.6 1553.6 193.4 1556.800 M196.8 1547.6 Q200.800 1553.600 196.8 1559.6" fill="none" stroke="#e0e0e0" stroke-width="2" stroke-linecap="round" stroke-linejoin="round" /></svg>
<svg style="left:0;top:0" width="1" height="1"><circle cx="230.4" cy="1552.8" r="1.9" fill="#b4b4b4"/><circle cx="237.700" cy="1552.8" r="1.9" fill="#b4b4b4"/><circle cx="245" cy="1552.8" r="1.9" fill="#b4b4b4"/></svg>
<div class="abs" style="left:274.8px;top:1515.8px;width:74.4px;height:74.8px;background:#363636;border-radius:8px;border:1.4px dashed #505050;"></div>
<svg style="left:0;top:0" width="1" height="1"><path d="M305.4 1546.4 L305.800 1541.4 L314.800 1532.2 L319.200 1536.600 L310.2 1545.800 Z M303.4 1550.400 H320" fill="none" stroke="#dadada" stroke-width="2.2" stroke-linecap="round" stroke-linejoin="round" /></svg>
<div class="t" style="left:286px;top:1558.75px;font-size:20.5px;color:#dadada;letter-spacing:-0.23px;-webkit-text-stroke:0px;">Cover</div>
<div class="abs" style="left:360.2px;top:1481px;width:893px;height:144.2px;background:#efefef;border-radius:6px;"></div>
<div class="abs" style="left:367.6px;top:1483.3px;width:879.4px;height:139.7px;background:#004a52;"></div>
<div class="abs" style="left:373.8px;top:1486px;width:28px;height:26.4px;background:#175f68;border-radius:4px;"></div>
<svg style="left:0;top:0" width="1" height="1"><path d="M387.8 1489.600 Q388.6 1498.2 397.2 1499 Q388.600 1499.800 387.8 1508.4 Q387 1499.8 378.4 1499 Q387 1498.2 387.8 1489.6 Z" fill="none" stroke="#ffffff" stroke-width="2.2" stroke-linecap="round" stroke-linejoin="round" /></svg>
<div class="abs" style="left:405.9px;top:1486px;width:87.7px;height:26.4px;background:#175f68;border-radius:4px;"></div>
<div class="t" style="left:411px;top:1486.35px;font-size:20.5px;color:#cfe6e8;letter-spacing:-0.29px;-webkit-text-stroke:0px;">AI media</div>
<div class="abs" style="left:501.8px;top:1486px;width:126.1px;height:26.4px;background:#175f68;border-radius:4px;"></div>
<div class="t" style="left:506px;top:1486.35px;font-size:20.5px;color:#cfe6e8;letter-spacing:0.95px;-webkit-text-stroke:0px;">00:00:03:00</div>
<div class="abs" style="left:368px;top:1517.1px;width:877px;height:75.8px;overflow:hidden;background:#e6d6be"><svg style="left:0px;top:0;overflow:hidden" width="100.2" height="76" viewBox="96 0 718 524" preserveAspectRatio="none"><use href="#scene" width="930" height="524"/></svg><svg style="left:100.05px;top:0;overflow:hidden" width="100.2" height="76" viewBox="96 0 718 524" preserveAspectRatio="none"><use href="#scene" width="930" height="524"/></svg><svg style="left:200.1px;top:0;overflow:hidden" width="100.2" height="76" viewBox="96 0 718 524" preserveAspectRatio="none"><use href="#scene" width="930" height="524"/></svg><svg style="left:300.15px;top:0;overflow:hidden" width="100.2" height="76" viewBox="96 0 718 524" preserveAspectRatio="none"><use href="#scene" width="930" height="524"/></svg><svg style="left:400.2px;top:0;overflow:hidden" width="100.2" height="76" viewBox="96 0 718 524" preserveAspectRatio="none"><use href="#scene" width="930" height="524"/></svg><svg style="left:500.25px;top:0;overflow:hidden" width="100.2" height="76" viewBox="96 0 718 524" preserveAspectRatio="none"><use href="#scene" width="930" height="524"/></svg><svg style="left:600.3px;top:0;overflow:hidden" width="100.2" height="76" viewBox="96 0 718 524" preserveAspectRatio="none"><use href="#scene" width="930" height="524"/></svg><svg style="left:700.35px;top:0;overflow:hidden" width="100.2" height="76" viewBox="96 0 718 524" preserveAspectRatio="none"><use href="#scene" width="930" height="524"/></svg><svg style="left:800.4px;top:0;overflow:hidden" width="100.2" height="76" viewBox="96 0 718 524" preserveAspectRatio="none"><use href="#scene" width="930" height="524"/></svg></div>
<div class="abs" style="left:367.6px;top:1609.8px;width:879.4px;height:2.2px;background:#2f6f77;"></div>
<svg style="left:0;top:0" width="1" height="1"><rect x="363.2" y="1545.4" width="1.6" height="1.8" fill="#9a9a9a"/><rect x="363.2" y="1549.5" width="1.6" height="1.8" fill="#9a9a9a"/><rect x="363.2" y="1553.6" width="1.6" height="1.8" fill="#9a9a9a"/><rect x="363.2" y="1557.7" width="1.6" height="1.8" fill="#9a9a9a"/><rect x="363.2" y="1561.8" width="1.6" height="1.8" fill="#9a9a9a"/><rect x="1249.4" y="1545.4" width="1.6" height="1.8" fill="#9a9a9a"/><rect x="1249.4" y="1549.5" width="1.6" height="1.8" fill="#9a9a9a"/><rect x="1249.4" y="1553.6" width="1.6" height="1.8" fill="#9a9a9a"/><rect x="1249.4" y="1557.7" width="1.6" height="1.8" fill="#9a9a9a"/><rect x="1249.4" y="1561.8" width="1.6" height="1.8" fill="#9a9a9a"/></svg>
<div class="abs" style="left:364.9px;top:1290px;width:2.3px;height:488px;background:#ffffff;"></div>
<div class="abs" style="left:356px;top:1265px;width:20px;height:28px;background:#222;border:4px solid #f0f0f0;border-radius:4.500px 4.5px 10px 10px"></div>
<div class="abs" style="left:365.7px;top:1273px;width:1.3px;height:15.4px;background:#686868;"></div>
<div class="abs" style="left:270px;top:1790px;width:2576px;height:12px;background:#3b3b3b;border-radius:6px;"></div>
</body>
</html>
